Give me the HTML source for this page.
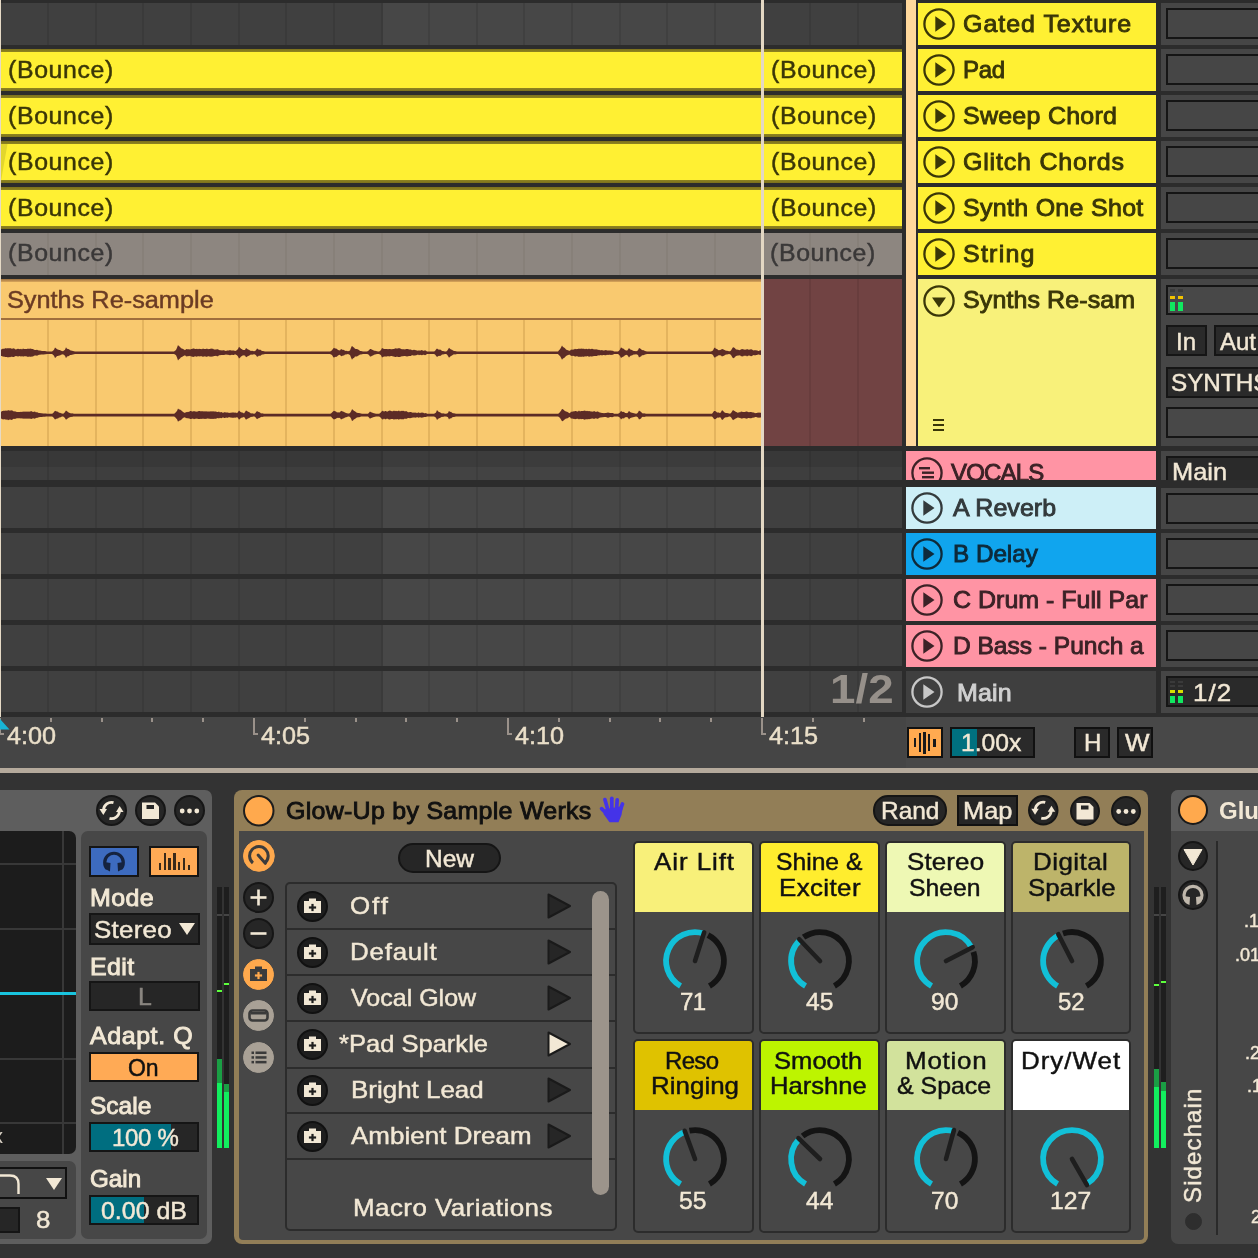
<!DOCTYPE html><html><head><meta charset="utf-8"><style>
html,body{margin:0;padding:0;}
body{width:1258px;height:1258px;overflow:hidden;background:#2c2c2c;position:relative;font-family:"Liberation Sans", sans-serif;}
.a{position:absolute;}
.t{white-space:pre;line-height:1;will-change:transform;transform-origin:0 0;}
</style></head><body>
<div class="a" style="left:0px;top:3px;width:382px;height:42px;background:#404040"></div>
<div class="a" style="left:382px;top:3px;width:381px;height:42px;background:#474747"></div>
<div class="a" style="left:763px;top:3px;width:139px;height:42px;background:#404040"></div>
<div class="a" style="left:47.2px;top:3px;width:2px;height:42px;background:#3a3a3a"></div>
<div class="a" style="left:94.8px;top:3px;width:2px;height:42px;background:#3a3a3a"></div>
<div class="a" style="left:142.4px;top:3px;width:2px;height:42px;background:#3a3a3a"></div>
<div class="a" style="left:190.0px;top:3px;width:2px;height:42px;background:#3a3a3a"></div>
<div class="a" style="left:237.7px;top:3px;width:2px;height:42px;background:#3a3a3a"></div>
<div class="a" style="left:285.3px;top:3px;width:2px;height:42px;background:#3a3a3a"></div>
<div class="a" style="left:332.9px;top:3px;width:2px;height:42px;background:#3a3a3a"></div>
<div class="a" style="left:380.5px;top:3px;width:2px;height:42px;background:#3a3a3a"></div>
<div class="a" style="left:428.1px;top:3px;width:2px;height:42px;background:#404040"></div>
<div class="a" style="left:475.7px;top:3px;width:2px;height:42px;background:#404040"></div>
<div class="a" style="left:523.3px;top:3px;width:2px;height:42px;background:#404040"></div>
<div class="a" style="left:570.9px;top:3px;width:2px;height:42px;background:#404040"></div>
<div class="a" style="left:618.5px;top:3px;width:2px;height:42px;background:#404040"></div>
<div class="a" style="left:666.1px;top:3px;width:2px;height:42px;background:#404040"></div>
<div class="a" style="left:713.8px;top:3px;width:2px;height:42px;background:#404040"></div>
<div class="a" style="left:761.4px;top:3px;width:2px;height:42px;background:#404040"></div>
<div class="a" style="left:809.0px;top:3px;width:2px;height:42px;background:#3a3a3a"></div>
<div class="a" style="left:856.6px;top:3px;width:2px;height:42px;background:#3a3a3a"></div>
<div class="a" style="left:0px;top:487px;width:382px;height:41px;background:#404040"></div>
<div class="a" style="left:382px;top:487px;width:381px;height:41px;background:#474747"></div>
<div class="a" style="left:763px;top:487px;width:139px;height:41px;background:#404040"></div>
<div class="a" style="left:47.2px;top:487px;width:2px;height:41px;background:#3a3a3a"></div>
<div class="a" style="left:94.8px;top:487px;width:2px;height:41px;background:#3a3a3a"></div>
<div class="a" style="left:142.4px;top:487px;width:2px;height:41px;background:#3a3a3a"></div>
<div class="a" style="left:190.0px;top:487px;width:2px;height:41px;background:#3a3a3a"></div>
<div class="a" style="left:237.7px;top:487px;width:2px;height:41px;background:#3a3a3a"></div>
<div class="a" style="left:285.3px;top:487px;width:2px;height:41px;background:#3a3a3a"></div>
<div class="a" style="left:332.9px;top:487px;width:2px;height:41px;background:#3a3a3a"></div>
<div class="a" style="left:380.5px;top:487px;width:2px;height:41px;background:#3a3a3a"></div>
<div class="a" style="left:428.1px;top:487px;width:2px;height:41px;background:#404040"></div>
<div class="a" style="left:475.7px;top:487px;width:2px;height:41px;background:#404040"></div>
<div class="a" style="left:523.3px;top:487px;width:2px;height:41px;background:#404040"></div>
<div class="a" style="left:570.9px;top:487px;width:2px;height:41px;background:#404040"></div>
<div class="a" style="left:618.5px;top:487px;width:2px;height:41px;background:#404040"></div>
<div class="a" style="left:666.1px;top:487px;width:2px;height:41px;background:#404040"></div>
<div class="a" style="left:713.8px;top:487px;width:2px;height:41px;background:#404040"></div>
<div class="a" style="left:761.4px;top:487px;width:2px;height:41px;background:#404040"></div>
<div class="a" style="left:809.0px;top:487px;width:2px;height:41px;background:#3a3a3a"></div>
<div class="a" style="left:856.6px;top:487px;width:2px;height:41px;background:#3a3a3a"></div>
<div class="a" style="left:0px;top:533px;width:382px;height:41px;background:#404040"></div>
<div class="a" style="left:382px;top:533px;width:381px;height:41px;background:#474747"></div>
<div class="a" style="left:763px;top:533px;width:139px;height:41px;background:#404040"></div>
<div class="a" style="left:47.2px;top:533px;width:2px;height:41px;background:#3a3a3a"></div>
<div class="a" style="left:94.8px;top:533px;width:2px;height:41px;background:#3a3a3a"></div>
<div class="a" style="left:142.4px;top:533px;width:2px;height:41px;background:#3a3a3a"></div>
<div class="a" style="left:190.0px;top:533px;width:2px;height:41px;background:#3a3a3a"></div>
<div class="a" style="left:237.7px;top:533px;width:2px;height:41px;background:#3a3a3a"></div>
<div class="a" style="left:285.3px;top:533px;width:2px;height:41px;background:#3a3a3a"></div>
<div class="a" style="left:332.9px;top:533px;width:2px;height:41px;background:#3a3a3a"></div>
<div class="a" style="left:380.5px;top:533px;width:2px;height:41px;background:#3a3a3a"></div>
<div class="a" style="left:428.1px;top:533px;width:2px;height:41px;background:#404040"></div>
<div class="a" style="left:475.7px;top:533px;width:2px;height:41px;background:#404040"></div>
<div class="a" style="left:523.3px;top:533px;width:2px;height:41px;background:#404040"></div>
<div class="a" style="left:570.9px;top:533px;width:2px;height:41px;background:#404040"></div>
<div class="a" style="left:618.5px;top:533px;width:2px;height:41px;background:#404040"></div>
<div class="a" style="left:666.1px;top:533px;width:2px;height:41px;background:#404040"></div>
<div class="a" style="left:713.8px;top:533px;width:2px;height:41px;background:#404040"></div>
<div class="a" style="left:761.4px;top:533px;width:2px;height:41px;background:#404040"></div>
<div class="a" style="left:809.0px;top:533px;width:2px;height:41px;background:#3a3a3a"></div>
<div class="a" style="left:856.6px;top:533px;width:2px;height:41px;background:#3a3a3a"></div>
<div class="a" style="left:0px;top:579px;width:382px;height:41px;background:#404040"></div>
<div class="a" style="left:382px;top:579px;width:381px;height:41px;background:#474747"></div>
<div class="a" style="left:763px;top:579px;width:139px;height:41px;background:#404040"></div>
<div class="a" style="left:47.2px;top:579px;width:2px;height:41px;background:#3a3a3a"></div>
<div class="a" style="left:94.8px;top:579px;width:2px;height:41px;background:#3a3a3a"></div>
<div class="a" style="left:142.4px;top:579px;width:2px;height:41px;background:#3a3a3a"></div>
<div class="a" style="left:190.0px;top:579px;width:2px;height:41px;background:#3a3a3a"></div>
<div class="a" style="left:237.7px;top:579px;width:2px;height:41px;background:#3a3a3a"></div>
<div class="a" style="left:285.3px;top:579px;width:2px;height:41px;background:#3a3a3a"></div>
<div class="a" style="left:332.9px;top:579px;width:2px;height:41px;background:#3a3a3a"></div>
<div class="a" style="left:380.5px;top:579px;width:2px;height:41px;background:#3a3a3a"></div>
<div class="a" style="left:428.1px;top:579px;width:2px;height:41px;background:#404040"></div>
<div class="a" style="left:475.7px;top:579px;width:2px;height:41px;background:#404040"></div>
<div class="a" style="left:523.3px;top:579px;width:2px;height:41px;background:#404040"></div>
<div class="a" style="left:570.9px;top:579px;width:2px;height:41px;background:#404040"></div>
<div class="a" style="left:618.5px;top:579px;width:2px;height:41px;background:#404040"></div>
<div class="a" style="left:666.1px;top:579px;width:2px;height:41px;background:#404040"></div>
<div class="a" style="left:713.8px;top:579px;width:2px;height:41px;background:#404040"></div>
<div class="a" style="left:761.4px;top:579px;width:2px;height:41px;background:#404040"></div>
<div class="a" style="left:809.0px;top:579px;width:2px;height:41px;background:#3a3a3a"></div>
<div class="a" style="left:856.6px;top:579px;width:2px;height:41px;background:#3a3a3a"></div>
<div class="a" style="left:0px;top:625px;width:382px;height:41px;background:#404040"></div>
<div class="a" style="left:382px;top:625px;width:381px;height:41px;background:#474747"></div>
<div class="a" style="left:763px;top:625px;width:139px;height:41px;background:#404040"></div>
<div class="a" style="left:47.2px;top:625px;width:2px;height:41px;background:#3a3a3a"></div>
<div class="a" style="left:94.8px;top:625px;width:2px;height:41px;background:#3a3a3a"></div>
<div class="a" style="left:142.4px;top:625px;width:2px;height:41px;background:#3a3a3a"></div>
<div class="a" style="left:190.0px;top:625px;width:2px;height:41px;background:#3a3a3a"></div>
<div class="a" style="left:237.7px;top:625px;width:2px;height:41px;background:#3a3a3a"></div>
<div class="a" style="left:285.3px;top:625px;width:2px;height:41px;background:#3a3a3a"></div>
<div class="a" style="left:332.9px;top:625px;width:2px;height:41px;background:#3a3a3a"></div>
<div class="a" style="left:380.5px;top:625px;width:2px;height:41px;background:#3a3a3a"></div>
<div class="a" style="left:428.1px;top:625px;width:2px;height:41px;background:#404040"></div>
<div class="a" style="left:475.7px;top:625px;width:2px;height:41px;background:#404040"></div>
<div class="a" style="left:523.3px;top:625px;width:2px;height:41px;background:#404040"></div>
<div class="a" style="left:570.9px;top:625px;width:2px;height:41px;background:#404040"></div>
<div class="a" style="left:618.5px;top:625px;width:2px;height:41px;background:#404040"></div>
<div class="a" style="left:666.1px;top:625px;width:2px;height:41px;background:#404040"></div>
<div class="a" style="left:713.8px;top:625px;width:2px;height:41px;background:#404040"></div>
<div class="a" style="left:761.4px;top:625px;width:2px;height:41px;background:#404040"></div>
<div class="a" style="left:809.0px;top:625px;width:2px;height:41px;background:#3a3a3a"></div>
<div class="a" style="left:856.6px;top:625px;width:2px;height:41px;background:#3a3a3a"></div>
<div class="a" style="left:0px;top:671px;width:382px;height:41px;background:#404040"></div>
<div class="a" style="left:382px;top:671px;width:381px;height:41px;background:#474747"></div>
<div class="a" style="left:763px;top:671px;width:139px;height:41px;background:#404040"></div>
<div class="a" style="left:47.2px;top:671px;width:2px;height:41px;background:#3a3a3a"></div>
<div class="a" style="left:94.8px;top:671px;width:2px;height:41px;background:#3a3a3a"></div>
<div class="a" style="left:142.4px;top:671px;width:2px;height:41px;background:#3a3a3a"></div>
<div class="a" style="left:190.0px;top:671px;width:2px;height:41px;background:#3a3a3a"></div>
<div class="a" style="left:237.7px;top:671px;width:2px;height:41px;background:#3a3a3a"></div>
<div class="a" style="left:285.3px;top:671px;width:2px;height:41px;background:#3a3a3a"></div>
<div class="a" style="left:332.9px;top:671px;width:2px;height:41px;background:#3a3a3a"></div>
<div class="a" style="left:380.5px;top:671px;width:2px;height:41px;background:#3a3a3a"></div>
<div class="a" style="left:428.1px;top:671px;width:2px;height:41px;background:#404040"></div>
<div class="a" style="left:475.7px;top:671px;width:2px;height:41px;background:#404040"></div>
<div class="a" style="left:523.3px;top:671px;width:2px;height:41px;background:#404040"></div>
<div class="a" style="left:570.9px;top:671px;width:2px;height:41px;background:#404040"></div>
<div class="a" style="left:618.5px;top:671px;width:2px;height:41px;background:#404040"></div>
<div class="a" style="left:666.1px;top:671px;width:2px;height:41px;background:#404040"></div>
<div class="a" style="left:713.8px;top:671px;width:2px;height:41px;background:#404040"></div>
<div class="a" style="left:761.4px;top:671px;width:2px;height:41px;background:#404040"></div>
<div class="a" style="left:809.0px;top:671px;width:2px;height:41px;background:#3a3a3a"></div>
<div class="a" style="left:856.6px;top:671px;width:2px;height:41px;background:#3a3a3a"></div>
<div class="a" style="left:0px;top:451px;width:382px;height:16px;background:#383838"></div>
<div class="a" style="left:382px;top:451px;width:381px;height:16px;background:#3c3c3c"></div>
<div class="a" style="left:763px;top:451px;width:139px;height:16px;background:#383838"></div>
<div class="a" style="left:47.2px;top:451px;width:2px;height:16px;background:#333333"></div>
<div class="a" style="left:94.8px;top:451px;width:2px;height:16px;background:#333333"></div>
<div class="a" style="left:142.4px;top:451px;width:2px;height:16px;background:#333333"></div>
<div class="a" style="left:190.0px;top:451px;width:2px;height:16px;background:#333333"></div>
<div class="a" style="left:237.7px;top:451px;width:2px;height:16px;background:#333333"></div>
<div class="a" style="left:285.3px;top:451px;width:2px;height:16px;background:#333333"></div>
<div class="a" style="left:332.9px;top:451px;width:2px;height:16px;background:#333333"></div>
<div class="a" style="left:380.5px;top:451px;width:2px;height:16px;background:#333333"></div>
<div class="a" style="left:428.1px;top:451px;width:2px;height:16px;background:#383838"></div>
<div class="a" style="left:475.7px;top:451px;width:2px;height:16px;background:#383838"></div>
<div class="a" style="left:523.3px;top:451px;width:2px;height:16px;background:#383838"></div>
<div class="a" style="left:570.9px;top:451px;width:2px;height:16px;background:#383838"></div>
<div class="a" style="left:618.5px;top:451px;width:2px;height:16px;background:#383838"></div>
<div class="a" style="left:666.1px;top:451px;width:2px;height:16px;background:#383838"></div>
<div class="a" style="left:713.8px;top:451px;width:2px;height:16px;background:#383838"></div>
<div class="a" style="left:761.4px;top:451px;width:2px;height:16px;background:#383838"></div>
<div class="a" style="left:809.0px;top:451px;width:2px;height:16px;background:#333333"></div>
<div class="a" style="left:856.6px;top:451px;width:2px;height:16px;background:#333333"></div>
<div class="a" style="left:0px;top:467px;width:382px;height:13px;background:#3e3e3e"></div>
<div class="a" style="left:382px;top:467px;width:381px;height:13px;background:#434343"></div>
<div class="a" style="left:763px;top:467px;width:139px;height:13px;background:#3e3e3e"></div>
<div class="a" style="left:47.2px;top:467px;width:2px;height:13px;background:#383838"></div>
<div class="a" style="left:94.8px;top:467px;width:2px;height:13px;background:#383838"></div>
<div class="a" style="left:142.4px;top:467px;width:2px;height:13px;background:#383838"></div>
<div class="a" style="left:190.0px;top:467px;width:2px;height:13px;background:#383838"></div>
<div class="a" style="left:237.7px;top:467px;width:2px;height:13px;background:#383838"></div>
<div class="a" style="left:285.3px;top:467px;width:2px;height:13px;background:#383838"></div>
<div class="a" style="left:332.9px;top:467px;width:2px;height:13px;background:#383838"></div>
<div class="a" style="left:380.5px;top:467px;width:2px;height:13px;background:#383838"></div>
<div class="a" style="left:428.1px;top:467px;width:2px;height:13px;background:#3d3d3d"></div>
<div class="a" style="left:475.7px;top:467px;width:2px;height:13px;background:#3d3d3d"></div>
<div class="a" style="left:523.3px;top:467px;width:2px;height:13px;background:#3d3d3d"></div>
<div class="a" style="left:570.9px;top:467px;width:2px;height:13px;background:#3d3d3d"></div>
<div class="a" style="left:618.5px;top:467px;width:2px;height:13px;background:#3d3d3d"></div>
<div class="a" style="left:666.1px;top:467px;width:2px;height:13px;background:#3d3d3d"></div>
<div class="a" style="left:713.8px;top:467px;width:2px;height:13px;background:#3d3d3d"></div>
<div class="a" style="left:761.4px;top:467px;width:2px;height:13px;background:#3d3d3d"></div>
<div class="a" style="left:809.0px;top:467px;width:2px;height:13px;background:#383838"></div>
<div class="a" style="left:856.6px;top:467px;width:2px;height:13px;background:#383838"></div>
<div class="a" style="left:1px;top:49px;width:760px;height:42px;background:#FFF033"></div>
<div class="a" style="left:1px;top:49px;width:760px;height:3px;background:linear-gradient(#7c711c,#8f8420)"></div>
<div class="a" style="left:1px;top:88px;width:760px;height:3px;background:linear-gradient(#8f8420,#7c711c)"></div>
<div class="a t" style="left:7.6px;top:59.0px;font-size:23px;color:#3a3608;letter-spacing:0.60px;transform:scaleX(1.0800);-webkit-text-stroke:0.45px #3a3608">(Bounce)</div>
<div class="a" style="left:764px;top:49px;width:138px;height:42px;background:#FFF033"></div>
<div class="a" style="left:764px;top:49px;width:138px;height:3px;background:linear-gradient(#7c711c,#8f8420)"></div>
<div class="a" style="left:764px;top:88px;width:138px;height:3px;background:linear-gradient(#8f8420,#7c711c)"></div>
<div class="a t" style="left:770.6px;top:59.0px;font-size:23px;color:#3a3608;letter-spacing:0.60px;transform:scaleX(1.0800);-webkit-text-stroke:0.45px #3a3608">(Bounce)</div>
<div class="a" style="left:1px;top:95px;width:760px;height:42px;background:#FFF033"></div>
<div class="a" style="left:1px;top:95px;width:760px;height:3px;background:linear-gradient(#7c711c,#8f8420)"></div>
<div class="a" style="left:1px;top:134px;width:760px;height:3px;background:linear-gradient(#8f8420,#7c711c)"></div>
<div class="a t" style="left:7.6px;top:105.0px;font-size:23px;color:#3a3608;letter-spacing:0.60px;transform:scaleX(1.0800);-webkit-text-stroke:0.45px #3a3608">(Bounce)</div>
<div class="a" style="left:764px;top:95px;width:138px;height:42px;background:#FFF033"></div>
<div class="a" style="left:764px;top:95px;width:138px;height:3px;background:linear-gradient(#7c711c,#8f8420)"></div>
<div class="a" style="left:764px;top:134px;width:138px;height:3px;background:linear-gradient(#8f8420,#7c711c)"></div>
<div class="a t" style="left:770.6px;top:105.0px;font-size:23px;color:#3a3608;letter-spacing:0.60px;transform:scaleX(1.0800);-webkit-text-stroke:0.45px #3a3608">(Bounce)</div>
<div class="a" style="left:1px;top:141px;width:760px;height:42px;background:#FFF033"></div>
<div class="a" style="left:1px;top:141px;width:760px;height:3px;background:linear-gradient(#7c711c,#8f8420)"></div>
<div class="a" style="left:1px;top:180px;width:760px;height:3px;background:linear-gradient(#8f8420,#7c711c)"></div>
<div class="a t" style="left:7.6px;top:151.0px;font-size:23px;color:#3a3608;letter-spacing:0.60px;transform:scaleX(1.0800);-webkit-text-stroke:0.45px #3a3608">(Bounce)</div>
<div class="a" style="left:764px;top:141px;width:138px;height:42px;background:#FFF033"></div>
<div class="a" style="left:764px;top:141px;width:138px;height:3px;background:linear-gradient(#7c711c,#8f8420)"></div>
<div class="a" style="left:764px;top:180px;width:138px;height:3px;background:linear-gradient(#8f8420,#7c711c)"></div>
<div class="a t" style="left:770.6px;top:151.0px;font-size:23px;color:#3a3608;letter-spacing:0.60px;transform:scaleX(1.0800);-webkit-text-stroke:0.45px #3a3608">(Bounce)</div>
<div class="a" style="left:1px;top:187px;width:760px;height:42px;background:#FFF033"></div>
<div class="a" style="left:1px;top:187px;width:760px;height:3px;background:linear-gradient(#7c711c,#8f8420)"></div>
<div class="a" style="left:1px;top:226px;width:760px;height:3px;background:linear-gradient(#8f8420,#7c711c)"></div>
<div class="a t" style="left:7.6px;top:197.0px;font-size:23px;color:#3a3608;letter-spacing:0.60px;transform:scaleX(1.0800);-webkit-text-stroke:0.45px #3a3608">(Bounce)</div>
<div class="a" style="left:764px;top:187px;width:138px;height:42px;background:#FFF033"></div>
<div class="a" style="left:764px;top:187px;width:138px;height:3px;background:linear-gradient(#7c711c,#8f8420)"></div>
<div class="a" style="left:764px;top:226px;width:138px;height:3px;background:linear-gradient(#8f8420,#7c711c)"></div>
<div class="a t" style="left:770.6px;top:197.0px;font-size:23px;color:#3a3608;letter-spacing:0.60px;transform:scaleX(1.0800);-webkit-text-stroke:0.45px #3a3608">(Bounce)</div>
<svg class="a" style="left:1px;top:144px" width="8" height="38"><polygon points="0,0 6.5,0 0,37" fill="#E2D62C"/></svg>
<div class="a" style="left:1px;top:232.5px;width:760px;height:42px;background:#8D8680"></div>
<div class="a" style="left:764px;top:232.5px;width:138px;height:42px;background:#8D8680"></div>
<div class="a" style="left:47.2px;top:232.5px;width:2px;height:42px;background:#878079"></div>
<div class="a" style="left:94.8px;top:232.5px;width:2px;height:42px;background:#878079"></div>
<div class="a" style="left:142.4px;top:232.5px;width:2px;height:42px;background:#878079"></div>
<div class="a" style="left:190.0px;top:232.5px;width:2px;height:42px;background:#878079"></div>
<div class="a" style="left:237.7px;top:232.5px;width:2px;height:42px;background:#878079"></div>
<div class="a" style="left:285.3px;top:232.5px;width:2px;height:42px;background:#878079"></div>
<div class="a" style="left:332.9px;top:232.5px;width:2px;height:42px;background:#878079"></div>
<div class="a" style="left:380.5px;top:232.5px;width:2px;height:42px;background:#878079"></div>
<div class="a" style="left:428.1px;top:232.5px;width:2px;height:42px;background:#878079"></div>
<div class="a" style="left:475.7px;top:232.5px;width:2px;height:42px;background:#878079"></div>
<div class="a" style="left:523.3px;top:232.5px;width:2px;height:42px;background:#878079"></div>
<div class="a" style="left:570.9px;top:232.5px;width:2px;height:42px;background:#878079"></div>
<div class="a" style="left:618.5px;top:232.5px;width:2px;height:42px;background:#878079"></div>
<div class="a" style="left:666.1px;top:232.5px;width:2px;height:42px;background:#878079"></div>
<div class="a" style="left:713.8px;top:232.5px;width:2px;height:42px;background:#878079"></div>
<div class="a" style="left:809.0px;top:232.5px;width:2px;height:42px;background:#878079"></div>
<div class="a" style="left:856.6px;top:232.5px;width:2px;height:42px;background:#878079"></div>
<div class="a t" style="left:7.6px;top:242.0px;font-size:23px;color:#3a3838;letter-spacing:0.60px;transform:scaleX(1.0800);-webkit-text-stroke:0.45px #3a3838">(Bounce)</div>
<div class="a t" style="left:770.3px;top:242.0px;font-size:23px;color:#3a3838;letter-spacing:0.60px;transform:scaleX(1.0800);-webkit-text-stroke:0.45px #3a3838">(Bounce)</div>
<div class="a" style="left:1px;top:279px;width:760px;height:167px;background:#F9C96F"></div>
<div class="a" style="left:1px;top:279px;width:760px;height:3px;background:linear-gradient(#9c7040,#d9a75c)"></div>
<div class="a" style="left:1px;top:318px;width:760px;height:2px;background:#A06E3C"></div>
<div class="a" style="left:47.2px;top:319.5px;width:2px;height:126.5px;background:#E4B45E"></div>
<div class="a" style="left:94.8px;top:319.5px;width:2px;height:126.5px;background:#E4B45E"></div>
<div class="a" style="left:142.4px;top:319.5px;width:2px;height:126.5px;background:#E4B45E"></div>
<div class="a" style="left:190.0px;top:319.5px;width:2px;height:126.5px;background:#E4B45E"></div>
<div class="a" style="left:237.7px;top:319.5px;width:2px;height:126.5px;background:#E4B45E"></div>
<div class="a" style="left:285.3px;top:319.5px;width:2px;height:126.5px;background:#E4B45E"></div>
<div class="a" style="left:332.9px;top:319.5px;width:2px;height:126.5px;background:#E4B45E"></div>
<div class="a" style="left:380.5px;top:319.5px;width:2px;height:126.5px;background:#E4B45E"></div>
<div class="a" style="left:428.1px;top:319.5px;width:2px;height:126.5px;background:#E4B45E"></div>
<div class="a" style="left:475.7px;top:319.5px;width:2px;height:126.5px;background:#E4B45E"></div>
<div class="a" style="left:523.3px;top:319.5px;width:2px;height:126.5px;background:#E4B45E"></div>
<div class="a" style="left:570.9px;top:319.5px;width:2px;height:126.5px;background:#E4B45E"></div>
<div class="a" style="left:618.5px;top:319.5px;width:2px;height:126.5px;background:#E4B45E"></div>
<div class="a" style="left:666.1px;top:319.5px;width:2px;height:126.5px;background:#E4B45E"></div>
<div class="a" style="left:713.8px;top:319.5px;width:2px;height:126.5px;background:#E4B45E"></div>
<div class="a t" style="left:6.9px;top:288.5px;font-size:23px;color:#6A3B24;transform:scaleX(1.1000);-webkit-text-stroke:0.45px #6A3B24">Synths Re-sample</div>
<div class="a" style="left:764px;top:279px;width:138px;height:167px;background:#714343"></div>
<div class="a" style="left:809.0px;top:279px;width:2px;height:167px;background:#683d3d"></div>
<div class="a" style="left:856.6px;top:279px;width:2px;height:167px;background:#683d3d"></div>
<svg class="a" style="left:1px;top:0" width="761" height="460"><path d="M0,352.7 L0,349.4 L1,349.3 L2,348.6 L3,348.9 L4,348.3 L5,348.3 L6,348.5 L7,348.0 L8,348.5 L9,348.1 L10,348.6 L11,348.7 L12,348.5 L13,348.3 L14,349.2 L15,349.4 L16,349.1 L17,348.8 L18,349.1 L19,349.3 L20,348.7 L21,349.5 L22,348.6 L23,349.1 L24,349.1 L25,349.1 L26,348.9 L27,348.4 L28,349.0 L29,348.6 L30,348.7 L31,349.0 L32,349.0 L33,349.7 L34,349.9 L35,349.9 L36,349.7 L37,350.2 L38,350.6 L39,350.6 L40,350.8 L41,350.9 L42,351.0 L43,351.0 L44,351.1 L45,351.2 L46,351.4 L47,351.4 L48,351.4 L49,351.4 L50,351.4 L51,351.4 L52,350.7 L53,349.7 L54,347.4 L55,348.2 L56,349.3 L57,349.5 L58,350.0 L59,350.0 L60,350.7 L61,351.0 L62,351.2 L63,350.5 L64,349.7 L65,347.2 L66,348.8 L67,349.1 L68,349.3 L69,350.3 L70,350.4 L71,350.7 L72,351.0 L73,351.2 L74,351.4 L75,351.4 L76,351.4 L77,351.4 L78,351.4 L79,351.4 L80,351.4 L81,351.4 L82,351.4 L83,351.4 L84,351.4 L85,351.4 L86,351.4 L87,351.4 L88,351.4 L89,351.4 L90,351.4 L91,351.4 L92,351.4 L93,351.4 L94,351.4 L95,351.4 L96,351.4 L97,351.4 L98,351.4 L99,351.4 L100,351.4 L101,351.4 L102,351.4 L103,351.4 L104,351.4 L105,351.4 L106,351.4 L107,351.4 L108,351.4 L109,351.4 L110,351.4 L111,351.4 L112,351.4 L113,351.4 L114,351.4 L115,351.4 L116,351.4 L117,351.4 L118,351.4 L119,351.4 L120,351.4 L121,351.4 L122,351.4 L123,351.4 L124,351.4 L125,351.4 L126,351.4 L127,351.4 L128,351.4 L129,351.4 L130,351.4 L131,351.4 L132,351.4 L133,351.4 L134,351.4 L135,351.4 L136,351.4 L137,351.4 L138,351.4 L139,351.4 L140,351.4 L141,351.4 L142,351.4 L143,351.4 L144,351.4 L145,351.4 L146,351.4 L147,351.4 L148,351.4 L149,351.4 L150,351.4 L151,351.4 L152,351.4 L153,351.4 L154,351.4 L155,351.4 L156,351.4 L157,351.4 L158,351.4 L159,351.4 L160,351.4 L161,351.4 L162,351.4 L163,351.4 L164,351.4 L165,351.4 L166,351.4 L167,351.4 L168,351.4 L169,351.4 L170,351.4 L171,351.4 L172,351.4 L173,351.4 L174,350.8 L175,350.1 L176,347.8 L177,344.9 L178,346.2 L179,346.8 L180,348.2 L181,348.5 L182,349.1 L183,349.6 L184,350.2 L185,349.2 L186,349.0 L187,349.4 L188,349.1 L189,349.7 L190,348.9 L191,348.9 L192,348.5 L193,348.6 L194,349.1 L195,349.0 L196,348.7 L197,349.3 L198,348.8 L199,349.1 L200,349.1 L201,349.2 L202,348.5 L203,349.1 L204,349.0 L205,348.9 L206,348.4 L207,349.3 L208,349.0 L209,348.9 L210,348.6 L211,348.8 L212,348.8 L213,349.5 L214,349.4 L215,349.6 L216,349.2 L217,349.2 L218,350.1 L219,350.2 L220,350.3 L221,350.4 L222,350.3 L223,350.3 L224,350.7 L225,351.0 L226,350.6 L227,350.6 L228,350.5 L229,350.1 L230,350.4 L231,350.6 L232,350.5 L233,350.5 L234,351.1 L235,350.7 L236,350.1 L237,348.9 L238,346.8 L239,347.7 L240,348.8 L241,349.3 L242,350.1 L243,350.0 L244,350.0 L245,348.1 L246,348.7 L247,349.4 L248,349.7 L249,350.4 L250,350.9 L251,350.7 L252,351.0 L253,351.2 L254,350.9 L255,350.2 L256,348.6 L257,349.0 L258,349.9 L259,349.5 L260,350.2 L261,351.0 L262,350.9 L263,351.2 L264,351.4 L265,351.4 L266,351.4 L267,351.4 L268,351.4 L269,351.4 L270,351.4 L271,351.4 L272,351.4 L273,351.4 L274,351.4 L275,351.4 L276,351.4 L277,351.4 L278,351.4 L279,351.4 L280,351.4 L281,351.4 L282,351.4 L283,351.4 L284,351.4 L285,351.4 L286,351.4 L287,351.4 L288,351.4 L289,351.4 L290,351.4 L291,351.4 L292,351.4 L293,351.4 L294,351.4 L295,351.4 L296,351.4 L297,351.4 L298,351.4 L299,351.4 L300,351.4 L301,351.4 L302,351.4 L303,351.4 L304,351.4 L305,351.4 L306,351.4 L307,351.4 L308,351.4 L309,351.4 L310,351.4 L311,351.4 L312,351.4 L313,351.4 L314,351.4 L315,351.4 L316,351.4 L317,351.4 L318,351.4 L319,351.4 L320,351.4 L321,351.4 L322,351.4 L323,351.4 L324,351.4 L325,351.4 L326,351.4 L327,351.4 L328,351.4 L329,351.4 L330,351.0 L331,350.3 L332,348.7 L333,347.7 L334,348.6 L335,348.5 L336,348.9 L337,349.9 L338,350.3 L339,350.6 L340,349.1 L341,349.4 L342,350.0 L343,349.8 L344,350.9 L345,350.8 L346,351.1 L347,351.3 L348,350.9 L349,350.4 L350,347.8 L351,345.7 L352,347.1 L353,347.5 L354,348.8 L355,348.9 L356,349.0 L357,349.6 L358,350.1 L359,350.9 L360,350.9 L361,351.2 L362,351.4 L363,351.4 L364,351.4 L365,351.4 L366,351.4 L367,351.1 L368,350.3 L369,349.0 L370,349.0 L371,349.7 L372,349.9 L373,350.7 L374,350.8 L375,351.1 L376,351.3 L377,351.4 L378,351.4 L379,350.9 L380,350.1 L381,347.9 L382,348.4 L383,349.0 L384,348.9 L385,348.9 L386,348.9 L387,349.3 L388,348.9 L389,349.1 L390,349.3 L391,349.3 L392,349.0 L393,349.0 L394,348.5 L395,348.3 L396,348.8 L397,348.3 L398,348.3 L399,348.3 L400,349.0 L401,349.2 L402,349.2 L403,349.3 L404,349.4 L405,349.1 L406,348.9 L407,349.1 L408,349.5 L409,349.5 L410,349.5 L411,350.3 L412,349.9 L413,349.8 L414,350.0 L415,350.2 L416,350.5 L417,350.8 L418,350.2 L419,350.7 L420,350.3 L421,350.1 L422,350.7 L423,350.7 L424,350.2 L425,350.7 L426,351.4 L427,351.4 L428,351.4 L429,351.4 L430,351.4 L431,351.4 L432,351.4 L433,351.4 L434,350.9 L435,349.6 L436,348.5 L437,349.2 L438,349.7 L439,349.5 L440,350.0 L441,351.0 L442,350.9 L443,351.2 L444,351.4 L445,351.4 L446,350.9 L447,349.5 L448,347.7 L449,348.7 L450,349.5 L451,349.8 L452,350.6 L453,351.1 L454,350.9 L455,351.2 L456,351.4 L457,351.4 L458,351.4 L459,351.4 L460,351.4 L461,351.4 L462,351.4 L463,351.4 L464,351.4 L465,351.4 L466,351.4 L467,351.4 L468,351.4 L469,351.4 L470,351.4 L471,351.4 L472,351.4 L473,351.4 L474,351.4 L475,351.4 L476,351.4 L477,351.4 L478,351.4 L479,351.4 L480,351.4 L481,351.4 L482,351.4 L483,351.4 L484,351.4 L485,351.4 L486,351.4 L487,351.4 L488,351.4 L489,351.4 L490,351.4 L491,351.4 L492,351.4 L493,351.4 L494,351.4 L495,351.4 L496,351.4 L497,351.4 L498,351.4 L499,351.4 L500,351.4 L501,351.4 L502,351.4 L503,351.4 L504,351.4 L505,351.4 L506,351.4 L507,351.4 L508,351.4 L509,351.4 L510,351.4 L511,351.4 L512,351.4 L513,351.4 L514,351.4 L515,351.4 L516,351.4 L517,351.4 L518,351.4 L519,351.4 L520,351.4 L521,351.4 L522,351.4 L523,351.4 L524,351.4 L525,351.4 L526,351.4 L527,351.4 L528,351.4 L529,351.4 L530,351.4 L531,351.4 L532,351.4 L533,351.4 L534,351.4 L535,351.4 L536,351.4 L537,351.4 L538,351.4 L539,351.4 L540,351.4 L541,351.4 L542,351.4 L543,351.4 L544,351.4 L545,351.4 L546,351.4 L547,351.4 L548,351.4 L549,351.4 L550,351.4 L551,351.4 L552,351.4 L553,351.4 L554,351.4 L555,351.4 L556,351.4 L557,351.4 L558,350.2 L559,349.3 L560,347.6 L561,345.6 L562,347.0 L563,347.4 L564,348.2 L565,349.4 L566,349.9 L567,350.3 L568,350.7 L569,350.7 L570,349.4 L571,349.7 L572,349.4 L573,349.6 L574,348.7 L575,349.2 L576,349.1 L577,348.9 L578,348.5 L579,348.9 L580,348.4 L581,348.8 L582,348.7 L583,348.7 L584,349.2 L585,348.8 L586,349.1 L587,349.3 L588,348.5 L589,349.2 L590,349.0 L591,348.8 L592,349.1 L593,349.4 L594,349.3 L595,349.4 L596,349.3 L597,350.1 L598,349.8 L599,350.2 L600,350.3 L601,350.0 L602,350.4 L603,350.4 L604,350.2 L605,350.1 L606,350.6 L607,350.4 L608,350.6 L609,350.6 L610,350.5 L611,350.7 L612,350.7 L613,351.4 L614,351.4 L615,351.4 L616,351.4 L617,351.4 L618,350.7 L619,349.5 L620,347.3 L621,348.2 L622,348.6 L623,349.1 L624,350.2 L625,350.3 L626,350.7 L627,349.4 L628,347.9 L629,349.2 L630,349.8 L631,349.9 L632,350.7 L633,350.9 L634,350.9 L635,351.2 L636,350.9 L637,350.3 L638,348.0 L639,348.6 L640,349.0 L641,350.2 L642,350.1 L643,350.5 L644,350.9 L645,351.2 L646,351.4 L647,351.4 L648,351.4 L649,351.4 L650,351.4 L651,351.4 L652,351.4 L653,351.4 L654,351.4 L655,351.4 L656,351.4 L657,351.4 L658,351.4 L659,351.4 L660,351.4 L661,351.4 L662,351.4 L663,351.4 L664,351.4 L665,351.4 L666,351.4 L667,351.4 L668,351.4 L669,351.4 L670,351.4 L671,351.4 L672,351.4 L673,351.4 L674,351.4 L675,351.4 L676,351.4 L677,351.4 L678,351.4 L679,351.4 L680,351.4 L681,351.4 L682,351.4 L683,351.4 L684,351.4 L685,351.4 L686,351.4 L687,351.4 L688,351.4 L689,351.4 L690,351.4 L691,351.4 L692,351.4 L693,351.4 L694,351.4 L695,351.4 L696,351.4 L697,351.4 L698,351.4 L699,351.4 L700,351.4 L701,351.4 L702,351.4 L703,351.4 L704,351.4 L705,351.4 L706,351.4 L707,351.4 L708,351.4 L709,351.4 L710,351.4 L711,351.1 L712,350.5 L713,348.3 L714,347.6 L715,349.0 L716,348.8 L717,349.9 L718,350.2 L719,350.1 L720,349.8 L721,349.0 L722,349.3 L723,349.7 L724,350.3 L725,350.8 L726,350.8 L727,351.1 L728,351.3 L729,351.2 L730,350.5 L731,348.7 L732,347.2 L733,347.5 L734,348.3 L735,349.4 L736,349.6 L737,349.8 L738,349.9 L739,350.2 L740,349.2 L741,349.2 L742,349.0 L743,349.8 L744,349.5 L745,349.8 L746,349.0 L747,349.6 L748,349.8 L749,349.6 L750,349.2 L751,349.5 L752,350.2 L753,350.5 L754,349.9 L755,350.4 L756,350.3 L757,350.9 L758,350.9 L759,350.3 L760,350.6 L760,354.8 L759,355.1 L758,354.5 L757,354.5 L756,355.1 L755,355.0 L754,355.5 L753,354.9 L752,355.2 L751,355.9 L750,356.2 L749,355.8 L748,355.6 L747,355.8 L746,356.4 L745,355.6 L744,355.9 L743,355.6 L742,356.4 L741,356.2 L740,356.2 L739,355.2 L738,355.5 L737,355.6 L736,355.8 L735,356.0 L734,357.1 L733,357.9 L732,358.2 L731,356.7 L730,354.9 L729,354.2 L728,354.1 L727,354.3 L726,354.6 L725,354.6 L724,355.1 L723,355.7 L722,356.1 L721,356.4 L720,355.6 L719,355.3 L718,355.2 L717,355.5 L716,356.6 L715,356.4 L714,357.8 L713,357.1 L712,354.9 L711,354.3 L710,354.0 L709,354.0 L708,354.0 L707,354.0 L706,354.0 L705,354.0 L704,354.0 L703,354.0 L702,354.0 L701,354.0 L700,354.0 L699,354.0 L698,354.0 L697,354.0 L696,354.0 L695,354.0 L694,354.0 L693,354.0 L692,354.0 L691,354.0 L690,354.0 L689,354.0 L688,354.0 L687,354.0 L686,354.0 L685,354.0 L684,354.0 L683,354.0 L682,354.0 L681,354.0 L680,354.0 L679,354.0 L678,354.0 L677,354.0 L676,354.0 L675,354.0 L674,354.0 L673,354.0 L672,354.0 L671,354.0 L670,354.0 L669,354.0 L668,354.0 L667,354.0 L666,354.0 L665,354.0 L664,354.0 L663,354.0 L662,354.0 L661,354.0 L660,354.0 L659,354.0 L658,354.0 L657,354.0 L656,354.0 L655,354.0 L654,354.0 L653,354.0 L652,354.0 L651,354.0 L650,354.0 L649,354.0 L648,354.0 L647,354.0 L646,354.0 L645,354.2 L644,354.5 L643,354.9 L642,355.3 L641,355.2 L640,356.4 L639,356.8 L638,357.4 L637,355.1 L636,354.5 L635,354.2 L634,354.5 L633,354.5 L632,354.7 L631,355.5 L630,355.6 L629,356.2 L628,357.5 L627,356.0 L626,354.7 L625,355.1 L624,355.2 L623,356.3 L622,356.8 L621,357.2 L620,358.1 L619,355.9 L618,354.7 L617,354.0 L616,354.0 L615,354.0 L614,354.0 L613,354.0 L612,354.7 L611,354.7 L610,354.9 L609,354.8 L608,354.8 L607,355.0 L606,354.8 L605,355.3 L604,355.2 L603,355.0 L602,355.0 L601,355.4 L600,355.1 L599,355.2 L598,355.6 L597,355.3 L596,356.1 L595,356.0 L594,356.1 L593,356.0 L592,356.3 L591,356.6 L590,356.4 L589,356.2 L588,356.9 L587,356.1 L586,356.3 L585,356.6 L584,356.2 L583,356.7 L582,356.7 L581,356.6 L580,357.0 L579,356.5 L578,356.9 L577,356.5 L576,356.3 L575,356.2 L574,356.7 L573,355.8 L572,356.0 L571,355.7 L570,356.0 L569,354.7 L568,354.7 L567,355.1 L566,355.5 L565,356.0 L564,357.2 L563,358.0 L562,358.4 L561,359.8 L560,357.8 L559,356.1 L558,355.2 L557,354.0 L556,354.0 L555,354.0 L554,354.0 L553,354.0 L552,354.0 L551,354.0 L550,354.0 L549,354.0 L548,354.0 L547,354.0 L546,354.0 L545,354.0 L544,354.0 L543,354.0 L542,354.0 L541,354.0 L540,354.0 L539,354.0 L538,354.0 L537,354.0 L536,354.0 L535,354.0 L534,354.0 L533,354.0 L532,354.0 L531,354.0 L530,354.0 L529,354.0 L528,354.0 L527,354.0 L526,354.0 L525,354.0 L524,354.0 L523,354.0 L522,354.0 L521,354.0 L520,354.0 L519,354.0 L518,354.0 L517,354.0 L516,354.0 L515,354.0 L514,354.0 L513,354.0 L512,354.0 L511,354.0 L510,354.0 L509,354.0 L508,354.0 L507,354.0 L506,354.0 L505,354.0 L504,354.0 L503,354.0 L502,354.0 L501,354.0 L500,354.0 L499,354.0 L498,354.0 L497,354.0 L496,354.0 L495,354.0 L494,354.0 L493,354.0 L492,354.0 L491,354.0 L490,354.0 L489,354.0 L488,354.0 L487,354.0 L486,354.0 L485,354.0 L484,354.0 L483,354.0 L482,354.0 L481,354.0 L480,354.0 L479,354.0 L478,354.0 L477,354.0 L476,354.0 L475,354.0 L474,354.0 L473,354.0 L472,354.0 L471,354.0 L470,354.0 L469,354.0 L468,354.0 L467,354.0 L466,354.0 L465,354.0 L464,354.0 L463,354.0 L462,354.0 L461,354.0 L460,354.0 L459,354.0 L458,354.0 L457,354.0 L456,354.0 L455,354.2 L454,354.5 L453,354.3 L452,354.8 L451,355.6 L450,355.9 L449,356.7 L448,357.7 L447,355.9 L446,354.5 L445,354.0 L444,354.0 L443,354.2 L442,354.5 L441,354.4 L440,355.4 L439,355.9 L438,355.7 L437,356.2 L436,356.9 L435,355.8 L434,354.5 L433,354.0 L432,354.0 L431,354.0 L430,354.0 L429,354.0 L428,354.0 L427,354.0 L426,354.0 L425,354.7 L424,355.2 L423,354.7 L422,354.7 L421,355.3 L420,355.1 L419,354.7 L418,355.2 L417,354.6 L416,354.9 L415,355.2 L414,355.4 L413,355.6 L412,355.5 L411,355.1 L410,355.9 L409,355.9 L408,355.9 L407,356.3 L406,356.5 L405,356.3 L404,356.0 L403,356.1 L402,356.2 L401,356.2 L400,356.4 L399,357.1 L398,357.1 L397,357.1 L396,356.6 L395,357.1 L394,356.9 L393,356.4 L392,356.4 L391,356.1 L390,356.1 L389,356.3 L388,356.5 L387,356.1 L386,356.5 L385,356.5 L384,356.5 L383,356.4 L382,357.0 L381,357.5 L380,355.3 L379,354.5 L378,354.0 L377,354.0 L376,354.1 L375,354.3 L374,354.6 L373,354.7 L372,355.5 L371,355.7 L370,356.4 L369,356.4 L368,355.1 L367,354.3 L366,354.0 L365,354.0 L364,354.0 L363,354.0 L362,354.0 L361,354.2 L360,354.5 L359,354.5 L358,355.3 L357,355.8 L356,356.4 L355,356.5 L354,356.6 L353,357.9 L352,358.3 L351,359.7 L350,357.6 L349,355.0 L348,354.5 L347,354.1 L346,354.3 L345,354.6 L344,354.5 L343,355.6 L342,355.4 L341,356.0 L340,356.3 L339,354.8 L338,355.1 L337,355.5 L336,356.5 L335,356.9 L334,356.8 L333,357.7 L332,356.7 L331,355.1 L330,354.4 L329,354.0 L328,354.0 L327,354.0 L326,354.0 L325,354.0 L324,354.0 L323,354.0 L322,354.0 L321,354.0 L320,354.0 L319,354.0 L318,354.0 L317,354.0 L316,354.0 L315,354.0 L314,354.0 L313,354.0 L312,354.0 L311,354.0 L310,354.0 L309,354.0 L308,354.0 L307,354.0 L306,354.0 L305,354.0 L304,354.0 L303,354.0 L302,354.0 L301,354.0 L300,354.0 L299,354.0 L298,354.0 L297,354.0 L296,354.0 L295,354.0 L294,354.0 L293,354.0 L292,354.0 L291,354.0 L290,354.0 L289,354.0 L288,354.0 L287,354.0 L286,354.0 L285,354.0 L284,354.0 L283,354.0 L282,354.0 L281,354.0 L280,354.0 L279,354.0 L278,354.0 L277,354.0 L276,354.0 L275,354.0 L274,354.0 L273,354.0 L272,354.0 L271,354.0 L270,354.0 L269,354.0 L268,354.0 L267,354.0 L266,354.0 L265,354.0 L264,354.0 L263,354.2 L262,354.5 L261,354.4 L260,355.2 L259,355.9 L258,355.5 L257,356.4 L256,356.8 L255,355.2 L254,354.5 L253,354.2 L252,354.4 L251,354.7 L250,354.5 L249,355.0 L248,355.7 L247,356.0 L246,356.7 L245,357.3 L244,355.4 L243,355.4 L242,355.3 L241,356.1 L240,356.6 L239,357.7 L238,358.6 L237,356.5 L236,355.3 L235,354.7 L234,354.3 L233,354.9 L232,354.9 L231,354.8 L230,355.0 L229,355.3 L228,354.9 L227,354.8 L226,354.8 L225,354.4 L224,354.7 L223,355.1 L222,355.1 L221,355.0 L220,355.1 L219,355.2 L218,355.3 L217,356.2 L216,356.2 L215,355.8 L214,356.0 L213,355.9 L212,356.6 L211,356.6 L210,356.8 L209,356.5 L208,356.4 L207,356.1 L206,357.0 L205,356.5 L204,356.4 L203,356.3 L202,356.9 L201,356.2 L200,356.3 L199,356.3 L198,356.6 L197,356.1 L196,356.7 L195,356.4 L194,356.3 L193,356.8 L192,356.9 L191,356.5 L190,356.5 L189,355.7 L188,356.3 L187,356.0 L186,356.4 L185,356.2 L184,355.2 L183,355.8 L182,356.3 L181,356.9 L180,357.2 L179,358.6 L178,359.2 L177,360.5 L176,357.6 L175,355.3 L174,354.6 L173,354.0 L172,354.0 L171,354.0 L170,354.0 L169,354.0 L168,354.0 L167,354.0 L166,354.0 L165,354.0 L164,354.0 L163,354.0 L162,354.0 L161,354.0 L160,354.0 L159,354.0 L158,354.0 L157,354.0 L156,354.0 L155,354.0 L154,354.0 L153,354.0 L152,354.0 L151,354.0 L150,354.0 L149,354.0 L148,354.0 L147,354.0 L146,354.0 L145,354.0 L144,354.0 L143,354.0 L142,354.0 L141,354.0 L140,354.0 L139,354.0 L138,354.0 L137,354.0 L136,354.0 L135,354.0 L134,354.0 L133,354.0 L132,354.0 L131,354.0 L130,354.0 L129,354.0 L128,354.0 L127,354.0 L126,354.0 L125,354.0 L124,354.0 L123,354.0 L122,354.0 L121,354.0 L120,354.0 L119,354.0 L118,354.0 L117,354.0 L116,354.0 L115,354.0 L114,354.0 L113,354.0 L112,354.0 L111,354.0 L110,354.0 L109,354.0 L108,354.0 L107,354.0 L106,354.0 L105,354.0 L104,354.0 L103,354.0 L102,354.0 L101,354.0 L100,354.0 L99,354.0 L98,354.0 L97,354.0 L96,354.0 L95,354.0 L94,354.0 L93,354.0 L92,354.0 L91,354.0 L90,354.0 L89,354.0 L88,354.0 L87,354.0 L86,354.0 L85,354.0 L84,354.0 L83,354.0 L82,354.0 L81,354.0 L80,354.0 L79,354.0 L78,354.0 L77,354.0 L76,354.0 L75,354.0 L74,354.0 L73,354.2 L72,354.4 L71,354.7 L70,355.0 L69,355.1 L68,356.1 L67,356.3 L66,356.6 L65,358.2 L64,355.7 L63,354.9 L62,354.2 L61,354.4 L60,354.7 L59,355.4 L58,355.4 L57,355.9 L56,356.1 L55,357.2 L54,358.0 L53,355.7 L52,354.7 L51,354.0 L50,354.0 L49,354.0 L48,354.0 L47,354.0 L46,354.0 L45,354.2 L44,354.3 L43,354.4 L42,354.4 L41,354.5 L40,354.6 L39,354.8 L38,354.8 L37,355.2 L36,355.7 L35,355.5 L34,355.5 L33,355.7 L32,356.4 L31,356.4 L30,356.7 L29,356.8 L28,356.4 L27,357.0 L26,356.5 L25,356.3 L24,356.3 L23,356.3 L22,356.8 L21,355.9 L20,356.7 L19,356.1 L18,356.3 L17,356.6 L16,356.3 L15,356.0 L14,356.2 L13,357.1 L12,356.9 L11,356.7 L10,356.8 L9,357.3 L8,356.9 L7,357.4 L6,356.9 L5,357.1 L4,357.1 L3,356.5 L2,356.8 L1,356.1 L0,356.0 Z" fill="#5C2B26"/><path d="M0,415.1 L0,412.0 L1,410.9 L2,411.0 L3,410.6 L4,411.1 L5,410.2 L6,410.9 L7,410.0 L8,410.4 L9,410.6 L10,410.5 L11,410.2 L12,411.1 L13,411.4 L14,411.2 L15,411.8 L16,412.0 L17,411.9 L18,412.0 L19,411.9 L20,411.8 L21,412.0 L22,411.4 L23,411.7 L24,411.4 L25,411.7 L26,411.5 L27,411.8 L28,411.5 L29,411.8 L30,411.1 L31,411.4 L32,411.9 L33,411.8 L34,411.5 L35,412.5 L36,412.1 L37,412.7 L38,412.9 L39,413.1 L40,413.3 L41,413.3 L42,413.4 L43,413.5 L44,413.5 L45,413.6 L46,413.8 L47,413.8 L48,413.8 L49,413.8 L50,413.8 L51,413.8 L52,413.3 L53,411.9 L54,410.7 L55,411.2 L56,411.6 L57,411.8 L58,412.8 L59,412.7 L60,413.3 L61,413.6 L62,413.8 L63,413.3 L64,412.0 L65,410.5 L66,411.3 L67,411.9 L68,412.7 L69,413.0 L70,413.4 L71,413.3 L72,413.6 L73,413.8 L74,413.8 L75,413.8 L76,413.8 L77,413.8 L78,413.8 L79,413.8 L80,413.8 L81,413.8 L82,413.8 L83,413.8 L84,413.8 L85,413.8 L86,413.8 L87,413.8 L88,413.8 L89,413.8 L90,413.8 L91,413.8 L92,413.8 L93,413.8 L94,413.8 L95,413.8 L96,413.8 L97,413.8 L98,413.8 L99,413.8 L100,413.8 L101,413.8 L102,413.8 L103,413.8 L104,413.8 L105,413.8 L106,413.8 L107,413.8 L108,413.8 L109,413.8 L110,413.8 L111,413.8 L112,413.8 L113,413.8 L114,413.8 L115,413.8 L116,413.8 L117,413.8 L118,413.8 L119,413.8 L120,413.8 L121,413.8 L122,413.8 L123,413.8 L124,413.8 L125,413.8 L126,413.8 L127,413.8 L128,413.8 L129,413.8 L130,413.8 L131,413.8 L132,413.8 L133,413.8 L134,413.8 L135,413.8 L136,413.8 L137,413.8 L138,413.8 L139,413.8 L140,413.8 L141,413.8 L142,413.8 L143,413.8 L144,413.8 L145,413.8 L146,413.8 L147,413.8 L148,413.8 L149,413.8 L150,413.8 L151,413.8 L152,413.8 L153,413.8 L154,413.8 L155,413.8 L156,413.8 L157,413.8 L158,413.8 L159,413.8 L160,413.8 L161,413.8 L162,413.8 L163,413.8 L164,413.8 L165,413.8 L166,413.8 L167,413.8 L168,413.8 L169,413.8 L170,413.8 L171,413.8 L172,413.8 L173,413.8 L174,413.3 L175,412.0 L176,410.9 L177,408.4 L178,409.5 L179,409.6 L180,410.3 L181,411.1 L182,412.1 L183,412.6 L184,412.9 L185,411.9 L186,412.2 L187,411.8 L188,411.9 L189,411.1 L190,411.1 L191,411.4 L192,411.6 L193,410.9 L194,411.5 L195,411.4 L196,411.7 L197,411.3 L198,411.1 L199,411.1 L200,411.4 L201,411.1 L202,411.6 L203,411.3 L204,411.5 L205,411.2 L206,411.6 L207,411.6 L208,411.4 L209,411.5 L210,411.2 L211,411.4 L212,411.2 L213,411.4 L214,411.4 L215,411.4 L216,411.9 L217,412.1 L218,411.6 L219,412.5 L220,412.0 L221,412.2 L222,413.0 L223,412.3 L224,412.3 L225,412.6 L226,412.5 L227,412.4 L228,413.1 L229,412.8 L230,412.8 L231,412.5 L232,412.5 L233,412.5 L234,412.8 L235,412.5 L236,413.3 L237,412.1 L238,410.4 L239,411.5 L240,412.3 L241,412.6 L242,412.8 L243,413.4 L244,411.9 L245,410.5 L246,411.1 L247,411.7 L248,412.1 L249,412.7 L250,413.5 L251,413.3 L252,413.6 L253,413.8 L254,413.5 L255,412.3 L256,410.9 L257,411.7 L258,412.1 L259,412.4 L260,413.4 L261,413.2 L262,413.5 L263,413.7 L264,413.8 L265,413.8 L266,413.8 L267,413.8 L268,413.8 L269,413.8 L270,413.8 L271,413.8 L272,413.8 L273,413.8 L274,413.8 L275,413.8 L276,413.8 L277,413.8 L278,413.8 L279,413.8 L280,413.8 L281,413.8 L282,413.8 L283,413.8 L284,413.8 L285,413.8 L286,413.8 L287,413.8 L288,413.8 L289,413.8 L290,413.8 L291,413.8 L292,413.8 L293,413.8 L294,413.8 L295,413.8 L296,413.8 L297,413.8 L298,413.8 L299,413.8 L300,413.8 L301,413.8 L302,413.8 L303,413.8 L304,413.8 L305,413.8 L306,413.8 L307,413.8 L308,413.8 L309,413.8 L310,413.8 L311,413.8 L312,413.8 L313,413.8 L314,413.8 L315,413.8 L316,413.8 L317,413.8 L318,413.8 L319,413.8 L320,413.8 L321,413.8 L322,413.8 L323,413.8 L324,413.8 L325,413.8 L326,413.8 L327,413.8 L328,413.8 L329,413.8 L330,413.6 L331,412.4 L332,411.5 L333,410.8 L334,411.3 L335,411.4 L336,412.4 L337,412.3 L338,412.4 L339,412.2 L340,410.7 L341,411.3 L342,411.6 L343,412.0 L344,412.6 L345,412.9 L346,413.3 L347,413.6 L348,413.6 L349,413.1 L350,411.6 L351,409.3 L352,409.7 L353,410.9 L354,411.3 L355,412.3 L356,412.8 L357,412.9 L358,412.9 L359,413.3 L360,413.6 L361,413.8 L362,413.8 L363,413.8 L364,413.8 L365,413.8 L366,413.8 L367,413.7 L368,412.7 L369,411.4 L370,412.3 L371,412.5 L372,412.9 L373,413.2 L374,413.5 L375,413.7 L376,413.8 L377,413.8 L378,413.8 L379,413.3 L380,412.3 L381,411.0 L382,410.8 L383,411.7 L384,410.9 L385,410.9 L386,411.7 L387,411.2 L388,410.8 L389,410.6 L390,411.1 L391,411.2 L392,411.2 L393,410.5 L394,411.2 L395,410.8 L396,411.3 L397,410.9 L398,410.5 L399,411.4 L400,410.7 L401,411.1 L402,410.8 L403,411.1 L404,411.6 L405,411.1 L406,411.6 L407,412.2 L408,412.3 L409,411.9 L410,412.1 L411,412.4 L412,412.7 L413,412.6 L414,412.8 L415,412.4 L416,413.3 L417,412.6 L418,412.5 L419,413.3 L420,412.5 L421,412.8 L422,412.6 L423,413.2 L424,413.2 L425,413.1 L426,413.8 L427,413.8 L428,413.8 L429,413.8 L430,413.8 L431,413.8 L432,413.8 L433,413.8 L434,413.3 L435,412.4 L436,410.1 L437,411.2 L438,411.9 L439,412.3 L440,412.9 L441,413.5 L442,413.3 L443,413.6 L444,413.8 L445,413.8 L446,413.5 L447,413.0 L448,410.8 L449,411.9 L450,411.7 L451,412.8 L452,413.2 L453,413.2 L454,413.5 L455,413.7 L456,413.8 L457,413.8 L458,413.8 L459,413.8 L460,413.8 L461,413.8 L462,413.8 L463,413.8 L464,413.8 L465,413.8 L466,413.8 L467,413.8 L468,413.8 L469,413.8 L470,413.8 L471,413.8 L472,413.8 L473,413.8 L474,413.8 L475,413.8 L476,413.8 L477,413.8 L478,413.8 L479,413.8 L480,413.8 L481,413.8 L482,413.8 L483,413.8 L484,413.8 L485,413.8 L486,413.8 L487,413.8 L488,413.8 L489,413.8 L490,413.8 L491,413.8 L492,413.8 L493,413.8 L494,413.8 L495,413.8 L496,413.8 L497,413.8 L498,413.8 L499,413.8 L500,413.8 L501,413.8 L502,413.8 L503,413.8 L504,413.8 L505,413.8 L506,413.8 L507,413.8 L508,413.8 L509,413.8 L510,413.8 L511,413.8 L512,413.8 L513,413.8 L514,413.8 L515,413.8 L516,413.8 L517,413.8 L518,413.8 L519,413.8 L520,413.8 L521,413.8 L522,413.8 L523,413.8 L524,413.8 L525,413.8 L526,413.8 L527,413.8 L528,413.8 L529,413.8 L530,413.8 L531,413.8 L532,413.8 L533,413.8 L534,413.8 L535,413.8 L536,413.8 L537,413.8 L538,413.8 L539,413.8 L540,413.8 L541,413.8 L542,413.8 L543,413.8 L544,413.8 L545,413.8 L546,413.8 L547,413.8 L548,413.8 L549,413.8 L550,413.8 L551,413.8 L552,413.8 L553,413.8 L554,413.8 L555,413.8 L556,413.8 L557,413.8 L558,413.2 L559,412.1 L560,410.7 L561,409.0 L562,409.3 L563,410.2 L564,410.9 L565,411.6 L566,411.8 L567,412.2 L568,412.9 L569,413.3 L570,411.4 L571,412.0 L572,411.2 L573,411.4 L574,411.0 L575,411.1 L576,411.4 L577,411.5 L578,410.6 L579,411.4 L580,411.0 L581,411.1 L582,411.1 L583,410.7 L584,410.4 L585,411.2 L586,410.8 L587,411.2 L588,411.0 L589,411.2 L590,411.5 L591,411.6 L592,411.7 L593,411.1 L594,411.6 L595,412.0 L596,411.4 L597,411.5 L598,412.2 L599,412.6 L600,412.7 L601,413.0 L602,412.9 L603,413.2 L604,413.1 L605,413.1 L606,412.8 L607,412.5 L608,412.7 L609,413.1 L610,413.1 L611,413.0 L612,413.1 L613,413.8 L614,413.8 L615,413.8 L616,413.8 L617,413.8 L618,413.3 L619,412.4 L620,410.8 L621,411.7 L622,412.0 L623,411.8 L624,413.0 L625,413.0 L626,413.3 L627,412.4 L628,410.7 L629,412.0 L630,412.4 L631,412.8 L632,413.0 L633,413.2 L634,413.5 L635,413.7 L636,413.5 L637,412.6 L638,410.6 L639,411.3 L640,411.8 L641,413.1 L642,413.4 L643,413.2 L644,413.5 L645,413.7 L646,413.8 L647,413.8 L648,413.8 L649,413.8 L650,413.8 L651,413.8 L652,413.8 L653,413.8 L654,413.8 L655,413.8 L656,413.8 L657,413.8 L658,413.8 L659,413.8 L660,413.8 L661,413.8 L662,413.8 L663,413.8 L664,413.8 L665,413.8 L666,413.8 L667,413.8 L668,413.8 L669,413.8 L670,413.8 L671,413.8 L672,413.8 L673,413.8 L674,413.8 L675,413.8 L676,413.8 L677,413.8 L678,413.8 L679,413.8 L680,413.8 L681,413.8 L682,413.8 L683,413.8 L684,413.8 L685,413.8 L686,413.8 L687,413.8 L688,413.8 L689,413.8 L690,413.8 L691,413.8 L692,413.8 L693,413.8 L694,413.8 L695,413.8 L696,413.8 L697,413.8 L698,413.8 L699,413.8 L700,413.8 L701,413.8 L702,413.8 L703,413.8 L704,413.8 L705,413.8 L706,413.8 L707,413.8 L708,413.8 L709,413.8 L710,413.8 L711,413.7 L712,412.6 L713,411.1 L714,411.0 L715,411.4 L716,412.5 L717,412.6 L718,412.4 L719,413.2 L720,411.9 L721,410.2 L722,410.8 L723,412.0 L724,412.7 L725,413.0 L726,413.0 L727,413.3 L728,413.6 L729,413.8 L730,412.9 L731,411.5 L732,409.9 L733,410.7 L734,411.2 L735,412.0 L736,412.3 L737,413.0 L738,412.1 L739,412.5 L740,411.6 L741,411.8 L742,412.0 L743,412.1 L744,412.0 L745,411.6 L746,411.5 L747,412.1 L748,412.3 L749,411.9 L750,412.0 L751,412.3 L752,412.6 L753,412.4 L754,413.2 L755,413.1 L756,412.9 L757,412.4 L758,412.8 L759,412.5 L760,412.9 L760,417.3 L759,417.7 L758,417.4 L757,417.8 L756,417.3 L755,417.1 L754,417.0 L753,417.8 L752,417.6 L751,417.9 L750,418.2 L749,418.3 L748,417.9 L747,418.1 L746,418.7 L745,418.6 L744,418.2 L743,418.1 L742,418.2 L741,418.4 L740,418.6 L739,417.7 L738,418.1 L737,417.2 L736,417.9 L735,418.2 L734,419.0 L733,419.5 L732,420.3 L731,418.7 L730,417.3 L729,416.4 L728,416.6 L727,416.9 L726,417.2 L725,417.2 L724,417.5 L723,418.2 L722,419.4 L721,420.0 L720,418.3 L719,417.0 L718,417.8 L717,417.6 L716,417.7 L715,418.8 L714,419.2 L713,419.1 L712,417.6 L711,416.5 L710,416.4 L709,416.4 L708,416.4 L707,416.4 L706,416.4 L705,416.4 L704,416.4 L703,416.4 L702,416.4 L701,416.4 L700,416.4 L699,416.4 L698,416.4 L697,416.4 L696,416.4 L695,416.4 L694,416.4 L693,416.4 L692,416.4 L691,416.4 L690,416.4 L689,416.4 L688,416.4 L687,416.4 L686,416.4 L685,416.4 L684,416.4 L683,416.4 L682,416.4 L681,416.4 L680,416.4 L679,416.4 L678,416.4 L677,416.4 L676,416.4 L675,416.4 L674,416.4 L673,416.4 L672,416.4 L671,416.4 L670,416.4 L669,416.4 L668,416.4 L667,416.4 L666,416.4 L665,416.4 L664,416.4 L663,416.4 L662,416.4 L661,416.4 L660,416.4 L659,416.4 L658,416.4 L657,416.4 L656,416.4 L655,416.4 L654,416.4 L653,416.4 L652,416.4 L651,416.4 L650,416.4 L649,416.4 L648,416.4 L647,416.4 L646,416.4 L645,416.5 L644,416.7 L643,417.0 L642,416.8 L641,417.1 L640,418.4 L639,418.9 L638,419.6 L637,417.6 L636,416.7 L635,416.5 L634,416.7 L633,417.0 L632,417.2 L631,417.4 L630,417.8 L629,418.2 L628,419.5 L627,417.8 L626,416.9 L625,417.2 L624,417.2 L623,418.4 L622,418.2 L621,418.5 L620,419.4 L619,417.8 L618,416.9 L617,416.4 L616,416.4 L615,416.4 L614,416.4 L613,416.4 L612,417.1 L611,417.2 L610,417.1 L609,417.1 L608,417.5 L607,417.7 L606,417.4 L605,417.1 L604,417.1 L603,417.0 L602,417.3 L601,417.2 L600,417.5 L599,417.6 L598,418.0 L597,418.7 L596,418.8 L595,418.2 L594,418.6 L593,419.1 L592,418.5 L591,418.6 L590,418.7 L589,419.0 L588,419.2 L587,419.0 L586,419.4 L585,419.0 L584,419.8 L583,419.5 L582,419.1 L581,419.1 L580,419.2 L579,418.8 L578,419.6 L577,418.7 L576,418.8 L575,419.1 L574,419.2 L573,418.8 L572,419.0 L571,418.2 L570,418.8 L569,416.9 L568,417.3 L567,418.0 L566,418.4 L565,418.6 L564,419.3 L563,420.0 L562,420.9 L561,421.2 L560,419.5 L559,418.1 L558,417.0 L557,416.4 L556,416.4 L555,416.4 L554,416.4 L553,416.4 L552,416.4 L551,416.4 L550,416.4 L549,416.4 L548,416.4 L547,416.4 L546,416.4 L545,416.4 L544,416.4 L543,416.4 L542,416.4 L541,416.4 L540,416.4 L539,416.4 L538,416.4 L537,416.4 L536,416.4 L535,416.4 L534,416.4 L533,416.4 L532,416.4 L531,416.4 L530,416.4 L529,416.4 L528,416.4 L527,416.4 L526,416.4 L525,416.4 L524,416.4 L523,416.4 L522,416.4 L521,416.4 L520,416.4 L519,416.4 L518,416.4 L517,416.4 L516,416.4 L515,416.4 L514,416.4 L513,416.4 L512,416.4 L511,416.4 L510,416.4 L509,416.4 L508,416.4 L507,416.4 L506,416.4 L505,416.4 L504,416.4 L503,416.4 L502,416.4 L501,416.4 L500,416.4 L499,416.4 L498,416.4 L497,416.4 L496,416.4 L495,416.4 L494,416.4 L493,416.4 L492,416.4 L491,416.4 L490,416.4 L489,416.4 L488,416.4 L487,416.4 L486,416.4 L485,416.4 L484,416.4 L483,416.4 L482,416.4 L481,416.4 L480,416.4 L479,416.4 L478,416.4 L477,416.4 L476,416.4 L475,416.4 L474,416.4 L473,416.4 L472,416.4 L471,416.4 L470,416.4 L469,416.4 L468,416.4 L467,416.4 L466,416.4 L465,416.4 L464,416.4 L463,416.4 L462,416.4 L461,416.4 L460,416.4 L459,416.4 L458,416.4 L457,416.4 L456,416.4 L455,416.5 L454,416.7 L453,417.0 L452,417.0 L451,417.4 L450,418.5 L449,418.3 L448,419.4 L447,417.2 L446,416.7 L445,416.4 L444,416.4 L443,416.6 L442,416.9 L441,416.7 L440,417.3 L439,417.9 L438,418.3 L437,419.0 L436,420.1 L435,417.8 L434,416.9 L433,416.4 L432,416.4 L431,416.4 L430,416.4 L429,416.4 L428,416.4 L427,416.4 L426,416.4 L425,417.1 L424,417.0 L423,417.0 L422,417.6 L421,417.4 L420,417.7 L419,416.9 L418,417.7 L417,417.6 L416,416.9 L415,417.8 L414,417.4 L413,417.6 L412,417.5 L411,417.8 L410,418.1 L409,418.3 L408,417.9 L407,418.0 L406,418.6 L405,419.1 L404,418.6 L403,419.1 L402,419.4 L401,419.1 L400,419.5 L399,418.8 L398,419.7 L397,419.3 L396,418.9 L395,419.4 L394,419.0 L393,419.7 L392,419.0 L391,419.0 L390,419.1 L389,419.6 L388,419.4 L387,419.0 L386,418.5 L385,419.3 L384,419.3 L383,418.5 L382,419.4 L381,419.2 L380,417.9 L379,416.9 L378,416.4 L377,416.4 L376,416.4 L375,416.5 L374,416.7 L373,417.0 L372,417.3 L371,417.7 L370,417.9 L369,418.8 L368,417.5 L367,416.5 L366,416.4 L365,416.4 L364,416.4 L363,416.4 L362,416.4 L361,416.4 L360,416.6 L359,416.9 L358,417.3 L357,417.3 L356,417.4 L355,417.9 L354,418.9 L353,419.3 L352,420.5 L351,420.9 L350,418.6 L349,417.1 L348,416.6 L347,416.6 L346,416.9 L345,417.3 L344,417.6 L343,418.2 L342,418.6 L341,418.9 L340,419.5 L339,418.0 L338,417.8 L337,417.9 L336,417.8 L335,418.8 L334,418.9 L333,419.4 L332,418.7 L331,417.8 L330,416.6 L329,416.4 L328,416.4 L327,416.4 L326,416.4 L325,416.4 L324,416.4 L323,416.4 L322,416.4 L321,416.4 L320,416.4 L319,416.4 L318,416.4 L317,416.4 L316,416.4 L315,416.4 L314,416.4 L313,416.4 L312,416.4 L311,416.4 L310,416.4 L309,416.4 L308,416.4 L307,416.4 L306,416.4 L305,416.4 L304,416.4 L303,416.4 L302,416.4 L301,416.4 L300,416.4 L299,416.4 L298,416.4 L297,416.4 L296,416.4 L295,416.4 L294,416.4 L293,416.4 L292,416.4 L291,416.4 L290,416.4 L289,416.4 L288,416.4 L287,416.4 L286,416.4 L285,416.4 L284,416.4 L283,416.4 L282,416.4 L281,416.4 L280,416.4 L279,416.4 L278,416.4 L277,416.4 L276,416.4 L275,416.4 L274,416.4 L273,416.4 L272,416.4 L271,416.4 L270,416.4 L269,416.4 L268,416.4 L267,416.4 L266,416.4 L265,416.4 L264,416.4 L263,416.5 L262,416.7 L261,417.0 L260,416.8 L259,417.8 L258,418.1 L257,418.5 L256,419.3 L255,417.9 L254,416.7 L253,416.4 L252,416.6 L251,416.9 L250,416.7 L249,417.5 L248,418.1 L247,418.5 L246,419.1 L245,419.7 L244,418.3 L243,416.8 L242,417.4 L241,417.6 L240,417.9 L239,418.7 L238,419.8 L237,418.1 L236,416.9 L235,417.7 L234,417.4 L233,417.7 L232,417.7 L231,417.7 L230,417.4 L229,417.4 L228,417.1 L227,417.8 L226,417.7 L225,417.6 L224,417.9 L223,417.9 L222,417.2 L221,418.0 L220,418.2 L219,417.7 L218,418.6 L217,418.1 L216,418.3 L215,418.8 L214,418.8 L213,418.8 L212,419.0 L211,418.8 L210,419.0 L209,418.7 L208,418.8 L207,418.6 L206,418.6 L205,419.0 L204,418.7 L203,418.9 L202,418.6 L201,419.1 L200,418.8 L199,419.1 L198,419.1 L197,418.9 L196,418.5 L195,418.8 L194,418.7 L193,419.3 L192,418.6 L191,418.8 L190,419.1 L189,419.1 L188,418.3 L187,418.4 L186,418.0 L185,418.3 L184,417.3 L183,417.6 L182,418.1 L181,419.1 L180,419.9 L179,420.6 L178,420.7 L177,421.8 L176,419.3 L175,418.2 L174,416.9 L173,416.4 L172,416.4 L171,416.4 L170,416.4 L169,416.4 L168,416.4 L167,416.4 L166,416.4 L165,416.4 L164,416.4 L163,416.4 L162,416.4 L161,416.4 L160,416.4 L159,416.4 L158,416.4 L157,416.4 L156,416.4 L155,416.4 L154,416.4 L153,416.4 L152,416.4 L151,416.4 L150,416.4 L149,416.4 L148,416.4 L147,416.4 L146,416.4 L145,416.4 L144,416.4 L143,416.4 L142,416.4 L141,416.4 L140,416.4 L139,416.4 L138,416.4 L137,416.4 L136,416.4 L135,416.4 L134,416.4 L133,416.4 L132,416.4 L131,416.4 L130,416.4 L129,416.4 L128,416.4 L127,416.4 L126,416.4 L125,416.4 L124,416.4 L123,416.4 L122,416.4 L121,416.4 L120,416.4 L119,416.4 L118,416.4 L117,416.4 L116,416.4 L115,416.4 L114,416.4 L113,416.4 L112,416.4 L111,416.4 L110,416.4 L109,416.4 L108,416.4 L107,416.4 L106,416.4 L105,416.4 L104,416.4 L103,416.4 L102,416.4 L101,416.4 L100,416.4 L99,416.4 L98,416.4 L97,416.4 L96,416.4 L95,416.4 L94,416.4 L93,416.4 L92,416.4 L91,416.4 L90,416.4 L89,416.4 L88,416.4 L87,416.4 L86,416.4 L85,416.4 L84,416.4 L83,416.4 L82,416.4 L81,416.4 L80,416.4 L79,416.4 L78,416.4 L77,416.4 L76,416.4 L75,416.4 L74,416.4 L73,416.4 L72,416.6 L71,416.9 L70,416.8 L69,417.2 L68,417.5 L67,418.3 L66,418.9 L65,419.7 L64,418.2 L63,416.9 L62,416.4 L61,416.6 L60,416.9 L59,417.5 L58,417.4 L57,418.4 L56,418.6 L55,419.0 L54,419.5 L53,418.3 L52,416.9 L51,416.4 L50,416.4 L49,416.4 L48,416.4 L47,416.4 L46,416.4 L45,416.6 L44,416.7 L43,416.7 L42,416.8 L41,416.9 L40,416.9 L39,417.1 L38,417.3 L37,417.5 L36,418.1 L35,417.7 L34,418.7 L33,418.4 L32,418.3 L31,418.8 L30,419.1 L29,418.4 L28,418.7 L27,418.4 L26,418.7 L25,418.5 L24,418.8 L23,418.5 L22,418.8 L21,418.2 L20,418.4 L19,418.3 L18,418.2 L17,418.3 L16,418.2 L15,418.4 L14,419.0 L13,418.8 L12,419.1 L11,420.0 L10,419.7 L9,419.6 L8,419.8 L7,420.2 L6,419.3 L5,420.0 L4,419.1 L3,419.6 L2,419.2 L1,419.3 L0,418.2 Z" fill="#5C2B26"/></svg>
<div class="a" style="left:761px;top:0px;width:3px;height:717px;background:#E3D7C3"></div>
<div class="a" style="left:0px;top:0px;width:1.3px;height:717px;background:#E6DAC6"></div>
<div class="a" style="left:906px;top:0px;width:10px;height:446px;background:#FFD89C"></div>
<div class="a" style="left:0px;top:717px;width:906px;height:51px;background:#454545"></div>
<div class="a" style="left:-1.0px;top:718px;width:2px;height:17px;background:#9a918a"></div>
<div class="a" style="left:-1.0px;top:733px;width:5px;height:2px;background:#9a918a"></div>
<div class="a" style="left:49.8px;top:718px;width:2px;height:4px;background:#9a918a"></div>
<div class="a" style="left:100.6px;top:718px;width:2px;height:4px;background:#9a918a"></div>
<div class="a" style="left:151.4px;top:718px;width:2px;height:4px;background:#9a918a"></div>
<div class="a" style="left:202.2px;top:718px;width:2px;height:4px;background:#9a918a"></div>
<div class="a" style="left:253.0px;top:718px;width:2px;height:17px;background:#9a918a"></div>
<div class="a" style="left:253.0px;top:733px;width:5px;height:2px;background:#9a918a"></div>
<div class="a" style="left:303.8px;top:718px;width:2px;height:4px;background:#9a918a"></div>
<div class="a" style="left:354.6px;top:718px;width:2px;height:4px;background:#9a918a"></div>
<div class="a" style="left:405.4px;top:718px;width:2px;height:4px;background:#9a918a"></div>
<div class="a" style="left:456.2px;top:718px;width:2px;height:4px;background:#9a918a"></div>
<div class="a" style="left:507.0px;top:718px;width:2px;height:17px;background:#9a918a"></div>
<div class="a" style="left:507.0px;top:733px;width:5px;height:2px;background:#9a918a"></div>
<div class="a" style="left:557.8px;top:718px;width:2px;height:4px;background:#9a918a"></div>
<div class="a" style="left:608.6px;top:718px;width:2px;height:4px;background:#9a918a"></div>
<div class="a" style="left:659.4px;top:718px;width:2px;height:4px;background:#9a918a"></div>
<div class="a" style="left:710.2px;top:718px;width:2px;height:4px;background:#9a918a"></div>
<div class="a" style="left:761.0px;top:718px;width:2px;height:17px;background:#9a918a"></div>
<div class="a" style="left:761.0px;top:733px;width:5px;height:2px;background:#9a918a"></div>
<div class="a" style="left:811.8px;top:718px;width:2px;height:4px;background:#9a918a"></div>
<div class="a" style="left:862.6px;top:718px;width:2px;height:4px;background:#9a918a"></div>
<div class="a t" style="left:6.8px;top:724.0px;font-size:24px;color:#EADFC9;transform:scaleX(1.0511);-webkit-text-stroke:0.45px #EADFC9">4:00</div>
<div class="a t" style="left:260.8px;top:724.0px;font-size:24px;color:#EADFC9;transform:scaleX(1.0511);-webkit-text-stroke:0.45px #EADFC9">4:05</div>
<div class="a t" style="left:514.8px;top:724.0px;font-size:24px;color:#EADFC9;transform:scaleX(1.0511);-webkit-text-stroke:0.45px #EADFC9">4:10</div>
<div class="a t" style="left:768.8px;top:724.0px;font-size:24px;color:#EADFC9;transform:scaleX(1.0511);-webkit-text-stroke:0.45px #EADFC9">4:15</div>
<svg class="a" style="left:0;top:719px" width="10" height="11"><polygon points="0,0 9.5,10.5 0,10.5" fill="#18B4D4"/></svg>
<div class="a t" style="left:830.0px;top:669.4px;font-size:40px;color:#96908a;font-weight:bold;transform:scaleX(1.1429)">1/2</div>
<div class="a" style="left:0px;top:768px;width:1258px;height:5px;background:#B5AA9C"></div>
<div class="a" style="left:918px;top:3px;width:238px;height:41.5px;background:#FFF033"></div>
<svg class="a" style="left:923.2px;top:7.800000000000001px" width="32" height="32" viewBox="0 0 32 32"><circle cx="16" cy="16" r="14.6" fill="none" stroke="#3a3608" stroke-width="2.3"/><polygon points="12.3,8.3 23.5,16 12.3,23.7" fill="#3a3608"/></svg>
<div class="a t" style="left:963.3px;top:12.3px;font-size:24px;color:#3a3608;letter-spacing:0.95px;transform:scaleX(1.0400);-webkit-text-stroke:0.9px #3a3608">Gated Texture</div>
<div class="a" style="left:918px;top:49px;width:238px;height:41.5px;background:#FFF033"></div>
<svg class="a" style="left:923.2px;top:53.8px" width="32" height="32" viewBox="0 0 32 32"><circle cx="16" cy="16" r="14.6" fill="none" stroke="#3a3608" stroke-width="2.3"/><polygon points="12.3,8.3 23.5,16 12.3,23.7" fill="#3a3608"/></svg>
<div class="a t" style="left:963.2px;top:58.3px;font-size:24px;color:#3a3608;letter-spacing:-0.30px;-webkit-text-stroke:0.9px #3a3608">Pad</div>
<div class="a" style="left:918px;top:95px;width:238px;height:41.5px;background:#FFF033"></div>
<svg class="a" style="left:923.2px;top:99.8px" width="32" height="32" viewBox="0 0 32 32"><circle cx="16" cy="16" r="14.6" fill="none" stroke="#3a3608" stroke-width="2.3"/><polygon points="12.3,8.3 23.5,16 12.3,23.7" fill="#3a3608"/></svg>
<div class="a t" style="left:963.3px;top:104.3px;font-size:24px;color:#3a3608;letter-spacing:0.26px;transform:scaleX(1.0400);-webkit-text-stroke:0.9px #3a3608">Sweep Chord</div>
<div class="a" style="left:918px;top:141px;width:238px;height:41.5px;background:#FFF033"></div>
<svg class="a" style="left:923.2px;top:145.8px" width="32" height="32" viewBox="0 0 32 32"><circle cx="16" cy="16" r="14.6" fill="none" stroke="#3a3608" stroke-width="2.3"/><polygon points="12.3,8.3 23.5,16 12.3,23.7" fill="#3a3608"/></svg>
<div class="a t" style="left:963.3px;top:150.3px;font-size:24px;color:#3a3608;letter-spacing:0.79px;transform:scaleX(1.0400);-webkit-text-stroke:0.9px #3a3608">Glitch Chords</div>
<div class="a" style="left:918px;top:187px;width:238px;height:41.5px;background:#FFF033"></div>
<svg class="a" style="left:923.2px;top:191.8px" width="32" height="32" viewBox="0 0 32 32"><circle cx="16" cy="16" r="14.6" fill="none" stroke="#3a3608" stroke-width="2.3"/><polygon points="12.3,8.3 23.5,16 12.3,23.7" fill="#3a3608"/></svg>
<div class="a t" style="left:963.3px;top:196.3px;font-size:24px;color:#3a3608;letter-spacing:0.30px;transform:scaleX(1.0400);-webkit-text-stroke:0.9px #3a3608">Synth One Shot</div>
<div class="a" style="left:918px;top:233px;width:238px;height:41.5px;background:#FFF033"></div>
<svg class="a" style="left:923.2px;top:237.8px" width="32" height="32" viewBox="0 0 32 32"><circle cx="16" cy="16" r="14.6" fill="none" stroke="#3a3608" stroke-width="2.3"/><polygon points="12.3,8.3 23.5,16 12.3,23.7" fill="#3a3608"/></svg>
<div class="a t" style="left:963.3px;top:242.3px;font-size:24px;color:#3a3608;letter-spacing:1.20px;transform:scaleX(1.0400);-webkit-text-stroke:0.9px #3a3608">String</div>
<div class="a" style="left:918px;top:279px;width:238px;height:167px;background:#F8F17A"></div>
<svg class="a" style="left:923.2px;top:284.5px" width="32" height="32" viewBox="0 0 32 32"><circle cx="16" cy="16" r="14.6" fill="none" stroke="#3a3608" stroke-width="2.3"/><polygon points="9,12.5 23,12.5 16,22.5" fill="#3a3608"/></svg>
<div class="a t" style="left:963.3px;top:288.3px;font-size:24px;color:#3a3608;letter-spacing:0.12px;transform:scaleX(1.0400);-webkit-text-stroke:0.9px #3a3608">Synths Re-sam</div>
<div class="a" style="left:933px;top:419px;width:11px;height:2.2px;background:#3a3608"></div>
<div class="a" style="left:933px;top:424px;width:11px;height:2.2px;background:#3a3608"></div>
<div class="a" style="left:933px;top:429px;width:11px;height:2.2px;background:#3a3608"></div>
<div class="a" style="left:906px;top:451px;width:250px;height:29px;overflow:hidden;background:#FF94A4"><svg style="position:absolute;left:5px;top:5.5px" width="32" height="32" viewBox="0 0 32 32"><circle cx="16" cy="16" r="14.6" fill="none" stroke="#3b2226" stroke-width="2.3"/><rect x="8" y="10" width="11" height="2.4" fill="#3b2226"/><rect x="11" y="14.5" width="12" height="2.4" fill="#3b2226"/><rect x="11" y="19" width="12" height="2.4" fill="#3b2226"/></svg></div>
<div class="a" style="left:906px;top:451px;width:250px;height:29px;overflow:hidden">
<div class="a t" style="left:45.2px;top:9.5px;font-size:24px;color:#3b2226;letter-spacing:-0.82px;-webkit-text-stroke:0.9px #3b2226">VOCALS</div>
</div>
<div class="a" style="left:906px;top:487px;width:250px;height:41.5px;background:#CDEFF7"></div>
<svg class="a" style="left:911.2px;top:491.8px" width="32" height="32" viewBox="0 0 32 32"><circle cx="16" cy="16" r="14.6" fill="none" stroke="#333a3c" stroke-width="2.3"/><polygon points="12.3,8.3 23.5,16 12.3,23.7" fill="#333a3c"/></svg>
<div class="a t" style="left:953.2px;top:496.3px;font-size:24px;color:#333a3c;letter-spacing:0.06px;transform:scaleX(1.0400);-webkit-text-stroke:0.9px #333a3c">A Reverb</div>
<div class="a" style="left:906px;top:533px;width:250px;height:41.5px;background:#10A5EE"></div>
<svg class="a" style="left:911.2px;top:537.8px" width="32" height="32" viewBox="0 0 32 32"><circle cx="16" cy="16" r="14.6" fill="none" stroke="#0e2a3a" stroke-width="2.3"/><polygon points="12.3,8.3 23.5,16 12.3,23.7" fill="#0e2a3a"/></svg>
<div class="a t" style="left:953.2px;top:542.3px;font-size:24px;color:#0e2a3a;transform:scaleX(1.0094);-webkit-text-stroke:0.9px #0e2a3a">B Delay</div>
<div class="a" style="left:906px;top:579px;width:250px;height:41.5px;background:#FF94A4"></div>
<svg class="a" style="left:911.2px;top:583.8px" width="32" height="32" viewBox="0 0 32 32"><circle cx="16" cy="16" r="14.6" fill="none" stroke="#3b2226" stroke-width="2.3"/><polygon points="12.3,8.3 23.5,16 12.3,23.7" fill="#3b2226"/></svg>
<div class="a t" style="left:953.2px;top:588.3px;font-size:24px;color:#3b2226;letter-spacing:0.02px;transform:scaleX(1.0400);-webkit-text-stroke:0.9px #3b2226">C Drum - Full Par</div>
<div class="a" style="left:906px;top:625px;width:250px;height:41.5px;background:#FF94A4"></div>
<svg class="a" style="left:911.2px;top:629.8px" width="32" height="32" viewBox="0 0 32 32"><circle cx="16" cy="16" r="14.6" fill="none" stroke="#3b2226" stroke-width="2.3"/><polygon points="12.3,8.3 23.5,16 12.3,23.7" fill="#3b2226"/></svg>
<div class="a t" style="left:953.2px;top:634.3px;font-size:24px;color:#3b2226;transform:scaleX(1.0213);-webkit-text-stroke:0.9px #3b2226">D Bass - Punch a</div>
<div class="a" style="left:906px;top:671px;width:250px;height:41.5px;background:#3f3f3f"></div>
<svg class="a" style="left:911px;top:676px" width="32" height="32" viewBox="0 0 32 32"><circle cx="16" cy="16" r="14.6" fill="none" stroke="#C8C8C8" stroke-width="2.3"/><polygon points="12.3,8.3 23.5,16 12.3,23.7" fill="#C8C8C8"/></svg>
<div class="a t" style="left:956.5px;top:680.5px;font-size:24px;color:#D0D0D0;letter-spacing:0.16px;transform:scaleX(1.0400);-webkit-text-stroke:0.9px #D0D0D0">Main</div>
<div class="a" style="left:1160.5px;top:3px;width:98px;height:41.5px;background:#464646"></div>
<div class="a" style="left:1165.5px;top:8px;width:100px;height:31px;background:#464646;border:2px solid #151515;box-sizing:border-box"></div>
<div class="a" style="left:1160.5px;top:49px;width:98px;height:41.5px;background:#464646"></div>
<div class="a" style="left:1165.5px;top:54px;width:100px;height:31px;background:#464646;border:2px solid #151515;box-sizing:border-box"></div>
<div class="a" style="left:1160.5px;top:95px;width:98px;height:41.5px;background:#464646"></div>
<div class="a" style="left:1165.5px;top:100px;width:100px;height:31px;background:#464646;border:2px solid #151515;box-sizing:border-box"></div>
<div class="a" style="left:1160.5px;top:141px;width:98px;height:41.5px;background:#464646"></div>
<div class="a" style="left:1165.5px;top:146px;width:100px;height:31px;background:#464646;border:2px solid #151515;box-sizing:border-box"></div>
<div class="a" style="left:1160.5px;top:187px;width:98px;height:41.5px;background:#464646"></div>
<div class="a" style="left:1165.5px;top:192px;width:100px;height:31px;background:#464646;border:2px solid #151515;box-sizing:border-box"></div>
<div class="a" style="left:1160.5px;top:233px;width:98px;height:41.5px;background:#464646"></div>
<div class="a" style="left:1165.5px;top:238px;width:100px;height:31px;background:#464646;border:2px solid #151515;box-sizing:border-box"></div>
<div class="a" style="left:1160.5px;top:279px;width:98px;height:167px;background:#464646"></div>
<div class="a" style="left:1165.5px;top:284.5px;width:100px;height:30.5px;background:#484848;border:2px solid #151515;box-sizing:border-box"></div>
<div class="a" style="left:1170px;top:289px;width:5px;height:2.5px;background:#3a3a3a"></div>
<div class="a" style="left:1170px;top:296px;width:5px;height:3px;background:#F2C200"></div>
<div class="a" style="left:1170px;top:301.5px;width:5px;height:9.5px;background:#10E860"></div>
<div class="a" style="left:1177.5px;top:289px;width:5px;height:2.5px;background:#3a3a3a"></div>
<div class="a" style="left:1177.5px;top:296px;width:5px;height:3px;background:#F2C200"></div>
<div class="a" style="left:1177.5px;top:301.5px;width:5px;height:9.5px;background:#10E860"></div>
<div class="a" style="left:1165.5px;top:325px;width:41px;height:31.3px;background:#2a2a2a;border:2px solid #151515;box-sizing:border-box"></div>
<div class="a t" style="left:1176.4px;top:330.0px;font-size:24px;color:#F2E8D5;-webkit-text-stroke:0.45px #F2E8D5">In</div>
<div class="a" style="left:1214px;top:325px;width:60px;height:31.3px;background:#2a2a2a;border:2px solid #151515;box-sizing:border-box"></div>
<div class="a t" style="left:1219.8px;top:330.0px;font-size:24px;color:#F2E8D5;-webkit-text-stroke:0.45px #F2E8D5">Aut</div>
<div class="a" style="left:1165.5px;top:366.5px;width:100px;height:31px;background:#2a2a2a;border:2px solid #151515;box-sizing:border-box"></div>
<div class="a t" style="left:1170.9px;top:371.0px;font-size:24px;color:#F2E8D5;transform:scaleX(1.0103);-webkit-text-stroke:0.45px #F2E8D5">SYNTHS</div>
<div class="a" style="left:1165.5px;top:407px;width:100px;height:31.3px;background:#484848;border:2px solid #151515;box-sizing:border-box"></div>
<div class="a" style="left:1160.5px;top:451px;width:98px;height:29px;background:#464646"></div>
<div class="a" style="left:1165.5px;top:456px;width:100px;height:24px;background:#2a2a2a;border:2px solid #151515;border-bottom:none;box-sizing:border-box"></div>
<div class="a t" style="left:1171.7px;top:459.5px;font-size:24px;color:#F2E8D5;transform:scaleX(1.0577);-webkit-text-stroke:0.45px #F2E8D5">Main</div>
<div class="a" style="left:1160.5px;top:487.5px;width:98px;height:41.5px;background:#464646"></div>
<div class="a" style="left:1165.5px;top:492.5px;width:100px;height:31px;background:#464646;border:2px solid #151515;box-sizing:border-box"></div>
<div class="a" style="left:1160.5px;top:533px;width:98px;height:41.5px;background:#464646"></div>
<div class="a" style="left:1165.5px;top:538px;width:100px;height:31px;background:#464646;border:2px solid #151515;box-sizing:border-box"></div>
<div class="a" style="left:1160.5px;top:579px;width:98px;height:41.5px;background:#464646"></div>
<div class="a" style="left:1165.5px;top:584px;width:100px;height:31px;background:#464646;border:2px solid #151515;box-sizing:border-box"></div>
<div class="a" style="left:1160.5px;top:625px;width:98px;height:41.5px;background:#464646"></div>
<div class="a" style="left:1165.5px;top:630px;width:100px;height:31px;background:#464646;border:2px solid #151515;box-sizing:border-box"></div>
<div class="a" style="left:1160.5px;top:671px;width:98px;height:41.5px;background:#464646"></div>
<div class="a" style="left:1165.5px;top:676px;width:100px;height:31px;background:#2a2a2a;border:2px solid #151515;box-sizing:border-box"></div>
<div class="a" style="left:1170px;top:681px;width:5px;height:2.2px;background:#3a3a3a"></div>
<div class="a" style="left:1170px;top:685px;width:5px;height:2.2px;background:#3a3a3a"></div>
<div class="a" style="left:1170px;top:689.5px;width:5px;height:3px;background:#D8E000"></div>
<div class="a" style="left:1170px;top:695.5px;width:5px;height:7px;background:#10E860"></div>
<div class="a" style="left:1177.5px;top:681px;width:5px;height:2.2px;background:#3a3a3a"></div>
<div class="a" style="left:1177.5px;top:685px;width:5px;height:2.2px;background:#3a3a3a"></div>
<div class="a" style="left:1177.5px;top:689.5px;width:5px;height:3px;background:#D8E000"></div>
<div class="a" style="left:1177.5px;top:695.5px;width:5px;height:7px;background:#10E860"></div>
<div class="a t" style="left:1193.3px;top:681.0px;font-size:24px;color:#F2E8D5;letter-spacing:0.95px;transform:scaleX(1.0800);-webkit-text-stroke:0.45px #F2E8D5">1/2</div>
<div class="a" style="left:906px;top:717px;width:352px;height:51px;background:#484848"></div>
<div class="a" style="left:906.6px;top:727.4px;width:36.3px;height:30.4px;background:#FFAA50;border:2px solid #111;box-sizing:border-box"></div>
<div class="a" style="left:913.7px;top:738.0px;width:2.4px;height:9px;background:#1a1a1a"></div>
<div class="a" style="left:918.5px;top:733.0px;width:2.4px;height:19px;background:#1a1a1a"></div>
<div class="a" style="left:923.2px;top:731.5px;width:2.4px;height:22px;background:#1a1a1a"></div>
<div class="a" style="left:928.0px;top:734.0px;width:2.4px;height:17px;background:#1a1a1a"></div>
<div class="a" style="left:933.4px;top:738.5px;width:2.4px;height:8px;background:#1a1a1a"></div>
<div class="a" style="left:950px;top:727.4px;width:84.7px;height:30.4px;background:#2a2a2a;border:2px solid #111;box-sizing:border-box"></div>
<div class="a" style="left:952px;top:729.4px;width:25px;height:26.4px;background:#00707F"></div>
<div class="a t" style="left:961.4px;top:731.2px;font-size:24px;color:#F2E8D5;transform:scaleX(1.0271);-webkit-text-stroke:0.45px #F2E8D5">1.00x</div>
<div class="a" style="left:1073.6px;top:727.2px;width:36.2px;height:30.7px;background:#2a2a2a;border:2px solid #111;box-sizing:border-box"></div>
<div class="a t" style="left:1084.4px;top:731.2px;font-size:24px;color:#F2E8D5;-webkit-text-stroke:0.45px #F2E8D5">H</div>
<div class="a" style="left:1117px;top:727.2px;width:36px;height:30.7px;background:#2a2a2a;border:2px solid #111;box-sizing:border-box"></div>
<div class="a t" style="left:1124.7px;top:731.2px;font-size:24px;color:#F2E8D5;transform:scaleX(1.0800);-webkit-text-stroke:0.45px #F2E8D5">W</div>
<div class="a" style="left:0px;top:773px;width:1258px;height:485px;background:#333333"></div>
<div class="a" style="left:-10px;top:790px;width:222px;height:454px;background:#5e5e5e;border-radius:7px"></div>
<svg class="a" style="left:94.8px;top:793.5px" width="33" height="33" viewBox="-16.5 -16.5 33 33"><circle cx="0" cy="0" r="14.5" fill="#262626" stroke="#161616" stroke-width="2"/><path d="M-8,-0.5 A8,8 0 0 1 2,-7.8" fill="none" stroke="#F2E8D5" stroke-width="2.8"/><polygon points="-12,-1.5 -4.5,-1.5 -8.2,4.5" fill="#F2E8D5"/><path d="M8,0.5 A8,8 0 0 1 -2,7.8" fill="none" stroke="#F2E8D5" stroke-width="2.8"/><polygon points="12,1.5 4.5,1.5 8.2,-4.5" fill="#F2E8D5"/></svg>
<svg class="a" style="left:133.8px;top:793.5px" width="33" height="33" viewBox="-16.5 -16.5 33 33"><circle cx="0" cy="0" r="14.5" fill="#262626" stroke="#161616" stroke-width="2"/><path d="M-8.5,-8 H4.5 L8.5,-4 V8.5 H-8.5 Z" fill="#F2E8D5"/><rect x="-4" y="-5.5" width="7.5" height="4" fill="#262626"/></svg>
<svg class="a" style="left:172.5px;top:793.5px" width="33" height="33" viewBox="-16.5 -16.5 33 33"><circle cx="0" cy="0" r="14.5" fill="#262626" stroke="#161616" stroke-width="2"/><circle cx="-7.3" cy="0.5" r="2.4" fill="#F2E8D5"/><circle cx="0" cy="0.5" r="2.4" fill="#F2E8D5"/><circle cx="7.3" cy="0.5" r="2.4" fill="#F2E8D5"/></svg>
<div class="a" style="left:-10px;top:831px;width:86.3px;height:323px;background:#1c1c1c;border-radius:7px;overflow:hidden"><div class="a" style="left:0;top:32px;width:90px;height:2px;background:#383838"></div><div class="a" style="left:0;top:97px;width:90px;height:2px;background:#383838"></div><div class="a" style="left:0;top:227px;width:90px;height:2px;background:#383838"></div><div class="a" style="left:0;top:291px;width:90px;height:2px;background:#383838"></div><div class="a" style="left:71.6px;top:0;width:2px;height:323px;background:#383838"></div><div class="a" style="left:0;top:160.5px;width:90px;height:3px;background:#19C4DE"></div></div>
<div class="a t" style="left:-7px;top:1126px;font-size:20px;color:#d8d0c4">x</div>
<div class="a" style="left:-10px;top:1161px;width:86.3px;height:78px;background:#474747;border-radius:7px"></div>
<div class="a" style="left:-5px;top:1167.3px;width:71.5px;height:31.7px;background:#474747;border:2.5px solid #111;box-sizing:border-box"></div>
<svg class="a" style="left:0;top:1172px" width="24" height="24"><path d="M-2,3.5 H10 Q18.5,3.5 18.5,12 V22" fill="none" stroke="#F2E8D5" stroke-width="2.4"/></svg>
<svg class="a" style="left:45.5px;top:1177.5px" width="17" height="13"><polygon points="0,0 16,0 8,12" fill="#F2E8D5"/></svg>
<div class="a" style="left:-5px;top:1207px;width:25px;height:26px;background:#262626;border:2px solid #151515;box-sizing:border-box"></div>
<div class="a t" style="left:35.8px;top:1208.0px;font-size:24px;color:#F2E8D5;transform:scaleX(1.0800);-webkit-text-stroke:0.45px #F2E8D5">8</div>
<div class="a" style="left:81px;top:831.4px;width:126px;height:407.6px;background:#474747;border-radius:7px"></div>
<div class="a" style="left:88.8px;top:845.9px;width:50.1px;height:30.8px;background:#3D6BBF;border:2px solid #151515;box-sizing:border-box"></div>
<svg class="a" style="left:100px;top:847px" width="28" height="28" viewBox="0 0 28 28"><path d="M7.3,22 A9.3,9.3 0 1 1 20.7,22" fill="none" stroke="#15233f" stroke-width="3.2"/><path d="M4.5,15 Q3.5,22 10,24.5 L10.5,16 Z" fill="#15233f"/><path d="M23.5,15 Q24.5,22 18,24.5 L17.5,16 Z" fill="#15233f"/></svg>
<div class="a" style="left:149.4px;top:845.9px;width:50.1px;height:30.8px;background:#FFAA55;border:2px solid #151515;box-sizing:border-box"></div>
<div class="a" style="left:158.7px;top:862.9px;width:2.4px;height:6.7px;background:#3a2a1a"></div>
<div class="a" style="left:163.8px;top:852.9px;width:2.4px;height:16.7px;background:#3a2a1a"></div>
<div class="a" style="left:168.2px;top:857.6px;width:2.4px;height:12px;background:#3a2a1a"></div>
<div class="a" style="left:173.2px;top:852.9px;width:2.4px;height:16.7px;background:#3a2a1a"></div>
<div class="a" style="left:178.1px;top:862.4px;width:2.4px;height:7.2px;background:#3a2a1a"></div>
<div class="a" style="left:183.0px;top:857.6px;width:2.4px;height:12px;background:#3a2a1a"></div>
<div class="a" style="left:187.8px;top:864.8px;width:2.4px;height:4.8px;background:#3a2a1a"></div>
<div class="a t" style="left:90.2px;top:886.4px;font-size:24px;color:#F2E8D5;letter-spacing:0.41px;transform:scaleX(1.0400);-webkit-text-stroke:0.9px #F2E8D5">Mode</div>
<div class="a" style="left:88.7px;top:913px;width:111.5px;height:31.5px;background:#262626;border:2px solid #151515;box-sizing:border-box"></div>
<div class="a t" style="left:93.5px;top:918.0px;font-size:24px;color:#F2E8D5;letter-spacing:0.24px;transform:scaleX(1.0800);-webkit-text-stroke:0.45px #F2E8D5">Stereo</div>
<svg class="a" style="left:178.5px;top:922.5px" width="17" height="13"><polygon points="0,0 16,0 8,12" fill="#F2E8D5"/></svg>
<div class="a t" style="left:90.2px;top:954.5px;font-size:24px;color:#F2E8D5;letter-spacing:0.35px;transform:scaleX(1.0400);-webkit-text-stroke:0.9px #F2E8D5">Edit</div>
<div class="a" style="left:88.7px;top:981px;width:111.5px;height:30px;background:#262626;border:2px solid #151515;box-sizing:border-box"></div>
<div class="a t" style="left:138.3px;top:985.5px;font-size:23px;color:#8a8680;transform:scaleX(1.0800);-webkit-text-stroke:0.45px #8a8680">L</div>
<div class="a t" style="left:89.5px;top:1024.0px;font-size:24px;color:#F2E8D5;letter-spacing:0.56px;transform:scaleX(1.0400);-webkit-text-stroke:0.9px #F2E8D5">Adapt. Q</div>
<div class="a" style="left:89px;top:1052px;width:110px;height:30px;background:#FFAA55;border:2px solid #151515;box-sizing:border-box"></div>
<div class="a t" style="left:128.2px;top:1056.5px;font-size:23px;color:#111;letter-spacing:-0.20px;-webkit-text-stroke:0.45px #111">On</div>
<div class="a t" style="left:89.7px;top:1094.0px;font-size:24px;color:#F2E8D5;transform:scaleX(1.0213);-webkit-text-stroke:0.9px #F2E8D5">Scale</div>
<div class="a" style="left:89px;top:1122px;width:110px;height:30px;background:#262626;border:2px solid #151515;box-sizing:border-box"></div>
<div class="a" style="left:91px;top:1124px;width:80px;height:26px;background:#006E80"></div>
<div class="a t" style="left:111.8px;top:1126.0px;font-size:24px;color:#F2E8D5;letter-spacing:-0.32px;-webkit-text-stroke:0.45px #F2E8D5">100 %</div>
<div class="a t" style="left:89.7px;top:1166.7px;font-size:24px;color:#F2E8D5;transform:scaleX(1.0077);-webkit-text-stroke:0.9px #F2E8D5">Gain</div>
<div class="a" style="left:89px;top:1194.5px;width:110px;height:30px;background:#262626;border:2px solid #151515;box-sizing:border-box"></div>
<div class="a" style="left:91px;top:1196.5px;width:52.6px;height:26px;background:#006E80"></div>
<div class="a t" style="left:100.5px;top:1198.5px;font-size:24px;color:#F2E8D5;transform:scaleX(1.0386);-webkit-text-stroke:0.45px #F2E8D5">0.00 dB</div>
<div class="a" style="left:216.8px;top:887px;width:5.1px;height:260.5999999999999px;background:#1e1e1e"></div>
<div class="a" style="left:216.8px;top:914px;width:5.1px;height:2px;background:#454545"></div>
<div class="a" style="left:216.8px;top:990px;width:5.1px;height:2.4px;background:#5CFF3C"></div>
<div class="a" style="left:216.8px;top:1059px;width:5.1px;height:24px;background:#1A9E44"></div>
<div class="a" style="left:216.8px;top:1083px;width:5.1px;height:64.59999999999991px;background:#12EE5E"></div>
<div class="a" style="left:224.20000000000002px;top:887px;width:5.1px;height:260.5999999999999px;background:#1e1e1e"></div>
<div class="a" style="left:224.20000000000002px;top:914px;width:5.1px;height:2px;background:#454545"></div>
<div class="a" style="left:224.20000000000002px;top:982.5px;width:5.1px;height:2.4px;background:#5CFF3C"></div>
<div class="a" style="left:224.20000000000002px;top:1083.8px;width:5.1px;height:7.900000000000091px;background:#1A9E44"></div>
<div class="a" style="left:224.20000000000002px;top:1091.7px;width:5.1px;height:55.899999999999864px;background:#12EE5E"></div>
<div class="a" style="left:234px;top:790px;width:914px;height:454px;background:#927E57;border-radius:8px"></div>
<div class="a" style="left:238.5px;top:831px;width:905.5px;height:408.5px;background:#474747;border-radius:0 0 4px 4px"></div>
<svg class="a" style="left:241.6px;top:794.0px" width="33.5" height="33.5" viewBox="-16.75 -16.75 33.5 33.5"><circle cx="0" cy="0" r="14.75" fill="#FFA94D" stroke="#1e1e1e" stroke-width="2"/></svg>
<div class="a t" style="left:285.5px;top:799.0px;font-size:24px;color:#111;letter-spacing:0.27px;transform:scaleX(1.0400);-webkit-text-stroke:0.9px #111">Glow-Up by Sample Werks</div>
<svg class="a" style="left:595px;top:793px" width="32" height="32" viewBox="595 793 32 32"><g stroke="#4433E8" stroke-width="3.7" stroke-linecap="round" fill="none"><line x1="607" y1="814" x2="601.6" y2="808.6"/><line x1="607.6" y1="809" x2="604.9" y2="799.6"/><line x1="611.8" y1="809" x2="611.8" y2="798.3"/><line x1="616.6" y1="809" x2="617.2" y2="799.8"/><line x1="620.3" y1="810" x2="622.5" y2="803.9"/></g><path d="M604,809.5 L623,806 L621.5,815 L618.5,822.3 L609.5,822.3 L603.5,814 Z" fill="#4433E8"/></svg>
<div class="a" style="left:872.7px;top:795px;width:74.7px;height:31px;background:#262626;border:2px solid #151515;border-radius:15px;box-sizing:border-box"></div>
<div class="a t" style="left:880.7px;top:799.3px;font-size:24px;color:#F2E8D5;transform:scaleX(1.0175);-webkit-text-stroke:0.45px #F2E8D5">Rand</div>
<div class="a" style="left:957.3px;top:795px;width:60.6px;height:31px;background:#262626;border:2.5px solid #111;box-sizing:border-box"></div>
<div class="a t" style="left:963.1px;top:799.3px;font-size:24px;color:#F2E8D5;transform:scaleX(1.0574);-webkit-text-stroke:0.45px #F2E8D5">Map</div>
<svg class="a" style="left:1026.8px;top:794.0px" width="32.5" height="32.5" viewBox="-16.25 -16.25 32.5 32.5"><circle cx="0" cy="0" r="14.25" fill="#262626" stroke="#161616" stroke-width="2"/><path d="M-8,-0.5 A8,8 0 0 1 2,-7.8" fill="none" stroke="#F2E8D5" stroke-width="2.8"/><polygon points="-12,-1.5 -4.5,-1.5 -8.2,4.5" fill="#F2E8D5"/><path d="M8,0.5 A8,8 0 0 1 -2,7.8" fill="none" stroke="#F2E8D5" stroke-width="2.8"/><polygon points="12,1.5 4.5,1.5 8.2,-4.5" fill="#F2E8D5"/></svg>
<svg class="a" style="left:1068.5px;top:794.6px" width="32" height="32" viewBox="-16.0 -16.0 32 32"><circle cx="0" cy="0" r="14.0" fill="#262626" stroke="#161616" stroke-width="2"/><path d="M-8.5,-8 H4.5 L8.5,-4 V8.5 H-8.5 Z" fill="#F2E8D5"/><rect x="-4" y="-5.5" width="7.5" height="4" fill="#262626"/></svg>
<svg class="a" style="left:1109.6px;top:794.6px" width="32" height="32" viewBox="-16.0 -16.0 32 32"><circle cx="0" cy="0" r="14.0" fill="#262626" stroke="#161616" stroke-width="2"/><circle cx="-7.3" cy="0.5" r="2.4" fill="#F2E8D5"/><circle cx="0" cy="0.5" r="2.4" fill="#F2E8D5"/><circle cx="7.3" cy="0.5" r="2.4" fill="#F2E8D5"/></svg>
<svg class="a" style="left:242.2px;top:839.4px" width="33.8" height="33.8" viewBox="-16.9 -16.9 33.8 33.8"><circle cx="0" cy="0" r="15.4" fill="#FFA94D" stroke="#FFA94D" stroke-width="1"/><path d="M-5.98,7.12 A9.3,9.3 0 1 1 5.98,7.12" fill="none" stroke="#3c3c3c" stroke-width="3"/><line x1="-0.8" y1="-0.8" x2="6.4" y2="7.4" stroke="#3c3c3c" stroke-width="3" stroke-linecap="round"/></svg>
<svg class="a" style="left:242.4px;top:880.7px" width="33" height="33" viewBox="-16.5 -16.5 33 33"><circle cx="0" cy="0" r="14.5" fill="#262626" stroke="#161616" stroke-width="2"/><rect x="-8" y="-1.3" width="16" height="2.6" fill="#F2E8D5"/><rect x="-1.3" y="-8" width="2.6" height="16" fill="#F2E8D5"/></svg>
<svg class="a" style="left:242.4px;top:916.9px" width="33" height="33" viewBox="-16.5 -16.5 33 33"><circle cx="0" cy="0" r="14.5" fill="#262626" stroke="#161616" stroke-width="2"/><rect x="-8" y="-1.3" width="16" height="2.6" fill="#F2E8D5"/></svg>
<svg class="a" style="left:242.4px;top:958.2px" width="33" height="33" viewBox="-16.5 -16.5 33 33"><circle cx="0" cy="0" r="15.0" fill="#FFA94D" stroke="#FFA94D" stroke-width="1"/><path d="M-8.5,-5.5 H-3.5 V-8 H3.5 V-5.5 H8.5 V6.5 H-8.5 Z" fill="#3c3c3c"/><rect x="-3.6" y="-0.1" width="7.2" height="2.2" fill="#FFA94D"/><rect x="-1.1" y="-2.6" width="2.2" height="7.2" fill="#FFA94D"/></svg>
<svg class="a" style="left:242.4px;top:999.4px" width="33" height="33" viewBox="-16.5 -16.5 33 33"><circle cx="0" cy="0" r="15.0" fill="#A9A196" stroke="#A9A196" stroke-width="1"/><rect x="-9" y="-5" width="18" height="10" rx="3" fill="none" stroke="#3a3a3a" stroke-width="2.6"/><rect x="-8" y="-3.5" width="16" height="2.5" fill="#3a3a3a"/></svg>
<svg class="a" style="left:242.4px;top:1040.7px" width="33" height="33" viewBox="-16.5 -16.5 33 33"><circle cx="0" cy="0" r="15.0" fill="#A9A196" stroke="#A9A196" stroke-width="1"/><rect x="-7" y="-6" width="2.5" height="2.5" fill="#3a3a3a"/><rect x="-3" y="-6" width="11" height="2.5" fill="#3a3a3a"/><rect x="-7" y="-1.3" width="2.5" height="2.5" fill="#3a3a3a"/><rect x="-3" y="-1.3" width="11" height="2.5" fill="#3a3a3a"/><rect x="-7" y="3.4" width="2.5" height="2.5" fill="#3a3a3a"/><rect x="-3" y="3.4" width="11" height="2.5" fill="#3a3a3a"/></svg>
<div class="a" style="left:398px;top:843px;width:103px;height:30px;background:#262626;border:2px solid #151515;border-radius:15px;box-sizing:border-box"></div>
<div class="a t" style="left:425.0px;top:847.3px;font-size:24px;color:#F2E8D5;transform:scaleX(1.0204);-webkit-text-stroke:0.45px #F2E8D5">New</div>
<div class="a" style="left:285.3px;top:882px;width:332.1px;height:349px;border:2px solid #2c2c2c;border-radius:5px;box-sizing:border-box"></div>
<div class="a" style="left:287px;top:928.2px;width:329px;height:2px;background:#2c2c2c"></div>
<div class="a" style="left:287px;top:974.3px;width:329px;height:2px;background:#2c2c2c"></div>
<div class="a" style="left:287px;top:1020.3px;width:329px;height:2px;background:#2c2c2c"></div>
<div class="a" style="left:287px;top:1066.6px;width:329px;height:2px;background:#2c2c2c"></div>
<div class="a" style="left:287px;top:1112.3px;width:329px;height:2px;background:#2c2c2c"></div>
<div class="a" style="left:287px;top:1158.2px;width:329px;height:2px;background:#2c2c2c"></div>
<svg class="a" style="left:295.5px;top:889.5px" width="33" height="33" viewBox="-16.5 -16.5 33 33"><circle cx="0" cy="0" r="14.5" fill="#1e1e1e" stroke="#111" stroke-width="2"/><path d="M-8.5,-5.5 H-3.5 V-8 H3.5 V-5.5 H8.5 V6.5 H-8.5 Z" fill="#F2E8D5"/><rect x="-3.6" y="-0.1" width="7.2" height="2.2" fill="#1e1e1e"/><rect x="-1.1" y="-2.6" width="2.2" height="7.2" fill="#1e1e1e"/></svg>
<div class="a t" style="left:350.0px;top:893.8px;font-size:24px;color:#F2E8D5;letter-spacing:1.73px;transform:scaleX(1.0800);-webkit-text-stroke:0.45px #F2E8D5">Off</div>
<svg class="a" style="left:546.5px;top:893px" width="25" height="26"><polygon points="1.5,1.5 23,13 1.5,24.5" fill="#262626" stroke="#1a1a1a" stroke-width="2" stroke-linejoin="round"/></svg>
<svg class="a" style="left:295.5px;top:935.5px" width="33" height="33" viewBox="-16.5 -16.5 33 33"><circle cx="0" cy="0" r="14.5" fill="#1e1e1e" stroke="#111" stroke-width="2"/><path d="M-8.5,-5.5 H-3.5 V-8 H3.5 V-5.5 H8.5 V6.5 H-8.5 Z" fill="#F2E8D5"/><rect x="-3.6" y="-0.1" width="7.2" height="2.2" fill="#1e1e1e"/><rect x="-1.1" y="-2.6" width="2.2" height="7.2" fill="#1e1e1e"/></svg>
<div class="a t" style="left:350.0px;top:939.8px;font-size:24px;color:#F2E8D5;letter-spacing:0.71px;transform:scaleX(1.0800);-webkit-text-stroke:0.45px #F2E8D5">Default</div>
<svg class="a" style="left:546.5px;top:939px" width="25" height="26"><polygon points="1.5,1.5 23,13 1.5,24.5" fill="#262626" stroke="#1a1a1a" stroke-width="2" stroke-linejoin="round"/></svg>
<svg class="a" style="left:295.5px;top:981.5px" width="33" height="33" viewBox="-16.5 -16.5 33 33"><circle cx="0" cy="0" r="14.5" fill="#1e1e1e" stroke="#111" stroke-width="2"/><path d="M-8.5,-5.5 H-3.5 V-8 H3.5 V-5.5 H8.5 V6.5 H-8.5 Z" fill="#F2E8D5"/><rect x="-3.6" y="-0.1" width="7.2" height="2.2" fill="#1e1e1e"/><rect x="-1.1" y="-2.6" width="2.2" height="7.2" fill="#1e1e1e"/></svg>
<div class="a t" style="left:350.6px;top:985.8px;font-size:24px;color:#F2E8D5;transform:scaleX(1.0421);-webkit-text-stroke:0.45px #F2E8D5">Vocal Glow</div>
<svg class="a" style="left:546.5px;top:985px" width="25" height="26"><polygon points="1.5,1.5 23,13 1.5,24.5" fill="#262626" stroke="#1a1a1a" stroke-width="2" stroke-linejoin="round"/></svg>
<svg class="a" style="left:295.5px;top:1027.5px" width="33" height="33" viewBox="-16.5 -16.5 33 33"><circle cx="0" cy="0" r="14.5" fill="#1e1e1e" stroke="#111" stroke-width="2"/><path d="M-8.5,-5.5 H-3.5 V-8 H3.5 V-5.5 H8.5 V6.5 H-8.5 Z" fill="#F2E8D5"/><rect x="-3.6" y="-0.1" width="7.2" height="2.2" fill="#1e1e1e"/><rect x="-1.1" y="-2.6" width="2.2" height="7.2" fill="#1e1e1e"/></svg>
<div class="a t" style="left:339.2px;top:1031.8px;font-size:24px;color:#F2E8D5;transform:scaleX(1.0636);-webkit-text-stroke:0.45px #F2E8D5">*Pad Sparkle</div>
<svg class="a" style="left:546.5px;top:1031px" width="25" height="26"><polygon points="1.5,1.5 23,13 1.5,24.5" fill="#F2E8D5" stroke="#1a1a1a" stroke-width="2" stroke-linejoin="round"/></svg>
<svg class="a" style="left:295.5px;top:1073.5px" width="33" height="33" viewBox="-16.5 -16.5 33 33"><circle cx="0" cy="0" r="14.5" fill="#1e1e1e" stroke="#111" stroke-width="2"/><path d="M-8.5,-5.5 H-3.5 V-8 H3.5 V-5.5 H8.5 V6.5 H-8.5 Z" fill="#F2E8D5"/><rect x="-3.6" y="-0.1" width="7.2" height="2.2" fill="#1e1e1e"/><rect x="-1.1" y="-2.6" width="2.2" height="7.2" fill="#1e1e1e"/></svg>
<div class="a t" style="left:350.6px;top:1077.8px;font-size:24px;color:#F2E8D5;letter-spacing:0.01px;transform:scaleX(1.0800);-webkit-text-stroke:0.45px #F2E8D5">Bright Lead</div>
<svg class="a" style="left:546.5px;top:1077px" width="25" height="26"><polygon points="1.5,1.5 23,13 1.5,24.5" fill="#262626" stroke="#1a1a1a" stroke-width="2" stroke-linejoin="round"/></svg>
<svg class="a" style="left:295.5px;top:1119.5px" width="33" height="33" viewBox="-16.5 -16.5 33 33"><circle cx="0" cy="0" r="14.5" fill="#1e1e1e" stroke="#111" stroke-width="2"/><path d="M-8.5,-5.5 H-3.5 V-8 H3.5 V-5.5 H8.5 V6.5 H-8.5 Z" fill="#F2E8D5"/><rect x="-3.6" y="-0.1" width="7.2" height="2.2" fill="#1e1e1e"/><rect x="-1.1" y="-2.6" width="2.2" height="7.2" fill="#1e1e1e"/></svg>
<div class="a t" style="left:350.6px;top:1123.8px;font-size:24px;color:#F2E8D5;letter-spacing:0.04px;transform:scaleX(1.0800);-webkit-text-stroke:0.45px #F2E8D5">Ambient Dream</div>
<svg class="a" style="left:546.5px;top:1123px" width="25" height="26"><polygon points="1.5,1.5 23,13 1.5,24.5" fill="#262626" stroke="#1a1a1a" stroke-width="2" stroke-linejoin="round"/></svg>
<div class="a" style="left:592px;top:891px;width:17px;height:304px;background:#9C948B;border-radius:9px"></div>
<div class="a t" style="left:353.0px;top:1196.0px;font-size:24px;color:#F2E8D5;letter-spacing:0.42px;transform:scaleX(1.0800);-webkit-text-stroke:0.45px #F2E8D5">Macro Variations</div>
<div class="a" style="left:633.4px;top:841px;width:120.4px;height:192.5px;border:2px solid #2c2c2c;border-radius:5px;box-sizing:border-box;overflow:hidden"><div style="position:absolute;left:0;top:0;width:117px;height:68.5px;background:#F8F07A"></div></div>
<div class="a t" style="left:653.5px;top:850.4px;font-size:24px;color:#111;letter-spacing:0.87px;transform:scaleX(1.0800);-webkit-text-stroke:0.45px #111">Air Lift</div>
<svg class="a" style="left:658.5px;top:924.8px" width="72" height="72" viewBox="-36 -36 72 72"><path d="M12.99,-25.81 A28.9,28.9 0 0 1 14.45,25.03" fill="none" stroke="#141414" stroke-width="5.8"/><path d="M-14.45,25.03 A28.9,28.9 0 0 1 8.79,-27.53" fill="none" stroke="#12C0D8" stroke-width="5.8"/><line x1="0" y1="0" x2="9.15" y2="-28.63" stroke="#1e1e1e" stroke-width="4.6" stroke-linecap="round"/></svg>
<div class="a t" style="left:680.3px;top:990.4px;font-size:24px;color:#F2E8D5;letter-spacing:-0.70px;-webkit-text-stroke:0.45px #F2E8D5">71</div>
<div class="a" style="left:759.3px;top:841px;width:120.4px;height:192.5px;border:2px solid #2c2c2c;border-radius:5px;box-sizing:border-box;overflow:hidden"><div style="position:absolute;left:0;top:0;width:117px;height:68.5px;background:#FFED2E"></div></div>
<div class="a t" style="left:776.0px;top:850.4px;font-size:24px;color:#111;transform:scaleX(1.0274);-webkit-text-stroke:0.45px #111">Shine &amp;</div>
<div class="a t" style="left:779.0px;top:876.1px;font-size:24px;color:#111;letter-spacing:0.36px;transform:scaleX(1.0800);-webkit-text-stroke:0.45px #111">Exciter</div>
<svg class="a" style="left:784.4px;top:924.8px" width="72" height="72" viewBox="-36 -36 72 72"><path d="M-16.45,-23.76 A28.9,28.9 0 1 1 14.45,25.03" fill="none" stroke="#141414" stroke-width="5.8"/><path d="M-14.45,25.03 A28.9,28.9 0 0 1 -19.97,-20.89" fill="none" stroke="#12C0D8" stroke-width="5.8"/><line x1="0" y1="0" x2="-20.77" y2="-21.73" stroke="#1e1e1e" stroke-width="4.6" stroke-linecap="round"/></svg>
<div class="a t" style="left:805.7px;top:990.4px;font-size:24px;color:#F2E8D5;transform:scaleX(1.0259);-webkit-text-stroke:0.45px #F2E8D5">45</div>
<div class="a" style="left:885.2px;top:841px;width:120.4px;height:192.5px;border:2px solid #2c2c2c;border-radius:5px;box-sizing:border-box;overflow:hidden"><div style="position:absolute;left:0;top:0;width:117px;height:68.5px;background:#EEF8B4"></div></div>
<div class="a t" style="left:907.0px;top:850.4px;font-size:24px;color:#111;letter-spacing:0.13px;transform:scaleX(1.0800);-webkit-text-stroke:0.45px #111">Stereo</div>
<div class="a t" style="left:909.0px;top:876.1px;font-size:24px;color:#111;transform:scaleX(1.0290);-webkit-text-stroke:0.45px #111">Sheen</div>
<svg class="a" style="left:910.3000000000001px;top:924.8px" width="72" height="72" viewBox="-36 -36 72 72"><path d="M27.42,-9.12 A28.9,28.9 0 0 1 14.45,25.03" fill="none" stroke="#141414" stroke-width="5.8"/><path d="M-14.45,25.03 A28.9,28.9 0 1 1 25.66,-13.30" fill="none" stroke="#12C0D8" stroke-width="5.8"/><line x1="0" y1="0" x2="26.68" y2="-13.83" stroke="#1e1e1e" stroke-width="4.6" stroke-linecap="round"/></svg>
<div class="a t" style="left:931.2px;top:990.4px;font-size:24px;color:#F2E8D5;transform:scaleX(1.0222);-webkit-text-stroke:0.45px #F2E8D5">90</div>
<div class="a" style="left:1011.1px;top:841px;width:120.4px;height:192.5px;border:2px solid #2c2c2c;border-radius:5px;box-sizing:border-box;overflow:hidden"><div style="position:absolute;left:0;top:0;width:117px;height:68.5px;background:#BDB46A"></div></div>
<div class="a t" style="left:1033.3px;top:850.4px;font-size:24px;color:#111;letter-spacing:0.44px;transform:scaleX(1.0800);-webkit-text-stroke:0.45px #111">Digital</div>
<div class="a t" style="left:1028.2px;top:876.1px;font-size:24px;color:#111;transform:scaleX(1.0753);-webkit-text-stroke:0.45px #111">Sparkle</div>
<svg class="a" style="left:1036.2px;top:924.8px" width="72" height="72" viewBox="-36 -36 72 72"><path d="M-9.01,-27.46 A28.9,28.9 0 0 1 14.45,25.03" fill="none" stroke="#141414" stroke-width="5.8"/><path d="M-14.45,25.03 A28.9,28.9 0 0 1 -13.19,-25.71" fill="none" stroke="#12C0D8" stroke-width="5.8"/><line x1="0" y1="0" x2="-13.72" y2="-26.74" stroke="#1e1e1e" stroke-width="4.6" stroke-linecap="round"/></svg>
<div class="a t" style="left:1057.5px;top:990.4px;font-size:24px;color:#F2E8D5;letter-spacing:-0.20px;-webkit-text-stroke:0.45px #F2E8D5">52</div>
<div class="a" style="left:633.4px;top:1039.2px;width:120.4px;height:193.6px;border:2px solid #2c2c2c;border-radius:5px;box-sizing:border-box;overflow:hidden"><div style="position:absolute;left:0;top:0;width:117px;height:68.5px;background:#DFC200"></div></div>
<div class="a t" style="left:665.4px;top:1048.6px;font-size:24px;color:#111;letter-spacing:-0.67px;-webkit-text-stroke:0.45px #111">Reso</div>
<div class="a t" style="left:651.4px;top:1074.3px;font-size:24px;color:#111;letter-spacing:0.02px;transform:scaleX(1.0800);-webkit-text-stroke:0.45px #111">Ringing</div>
<svg class="a" style="left:658.5px;top:1123.0px" width="72" height="72" viewBox="-36 -36 72 72"><path d="M-5.55,-28.36 A28.9,28.9 0 0 1 14.45,25.03" fill="none" stroke="#141414" stroke-width="5.8"/><path d="M-14.45,25.03 A28.9,28.9 0 0 1 -9.92,-27.14" fill="none" stroke="#12C0D8" stroke-width="5.8"/><line x1="0" y1="0" x2="-10.32" y2="-28.23" stroke="#1e1e1e" stroke-width="4.6" stroke-linecap="round"/></svg>
<div class="a t" style="left:679.4px;top:1188.6px;font-size:24px;color:#F2E8D5;transform:scaleX(1.0259);-webkit-text-stroke:0.45px #F2E8D5">55</div>
<div class="a" style="left:759.3px;top:1039.2px;width:120.4px;height:193.6px;border:2px solid #2c2c2c;border-radius:5px;box-sizing:border-box;overflow:hidden"><div style="position:absolute;left:0;top:0;width:117px;height:68.5px;background:#BDF400"></div></div>
<div class="a t" style="left:773.8px;top:1048.6px;font-size:24px;color:#111;transform:scaleX(1.0663);-webkit-text-stroke:0.45px #111">Smooth</div>
<div class="a t" style="left:769.6px;top:1074.3px;font-size:24px;color:#111;transform:scaleX(1.0659);-webkit-text-stroke:0.45px #111">Harshne</div>
<svg class="a" style="left:784.4px;top:1123.0px" width="72" height="72" viewBox="-36 -36 72 72"><path d="M-17.42,-23.06 A28.9,28.9 0 1 1 14.45,25.03" fill="none" stroke="#141414" stroke-width="5.8"/><path d="M-14.45,25.03 A28.9,28.9 0 0 1 -20.81,-20.05" fill="none" stroke="#12C0D8" stroke-width="5.8"/><line x1="0" y1="0" x2="-21.64" y2="-20.85" stroke="#1e1e1e" stroke-width="4.6" stroke-linecap="round"/></svg>
<div class="a t" style="left:805.7px;top:1188.6px;font-size:24px;color:#F2E8D5;transform:scaleX(1.0259);-webkit-text-stroke:0.45px #F2E8D5">44</div>
<div class="a" style="left:885.2px;top:1039.2px;width:120.4px;height:193.6px;border:2px solid #2c2c2c;border-radius:5px;box-sizing:border-box;overflow:hidden"><div style="position:absolute;left:0;top:0;width:117px;height:68.5px;background:#D2E29C"></div></div>
<div class="a t" style="left:904.8px;top:1048.6px;font-size:24px;color:#111;letter-spacing:0.73px;transform:scaleX(1.0800);-webkit-text-stroke:0.45px #111">Motion</div>
<div class="a t" style="left:897.2px;top:1074.3px;font-size:24px;color:#111;transform:scaleX(1.0374);-webkit-text-stroke:0.45px #111">&amp; Space</div>
<svg class="a" style="left:910.3000000000001px;top:1123.0px" width="72" height="72" viewBox="-36 -36 72 72"><path d="M11.92,-26.33 A28.9,28.9 0 0 1 14.45,25.03" fill="none" stroke="#141414" stroke-width="5.8"/><path d="M-14.45,25.03 A28.9,28.9 0 0 1 7.65,-27.87" fill="none" stroke="#12C0D8" stroke-width="5.8"/><line x1="0" y1="0" x2="7.96" y2="-28.98" stroke="#1e1e1e" stroke-width="4.6" stroke-linecap="round"/></svg>
<div class="a t" style="left:931.2px;top:1188.6px;font-size:24px;color:#F2E8D5;transform:scaleX(1.0222);-webkit-text-stroke:0.45px #F2E8D5">70</div>
<div class="a" style="left:1011.1px;top:1039.2px;width:120.4px;height:193.6px;border:2px solid #2c2c2c;border-radius:5px;box-sizing:border-box;overflow:hidden"><div style="position:absolute;left:0;top:0;width:117px;height:68.5px;background:#FFFFFF"></div></div>
<div class="a t" style="left:1020.5px;top:1048.6px;font-size:24px;color:#111;letter-spacing:0.92px;transform:scaleX(1.0800);-webkit-text-stroke:0.45px #111">Dry/Wet</div>
<svg class="a" style="left:1036.2px;top:1123.0px" width="72" height="72" viewBox="-36 -36 72 72"><path d="M-14.45,25.03 A28.9,28.9 0 1 1 14.45,25.03" fill="none" stroke="#12C0D8" stroke-width="5.8"/><line x1="0" y1="0" x2="15.03" y2="26.03" stroke="#1e1e1e" stroke-width="4.6" stroke-linecap="round"/></svg>
<div class="a t" style="left:1050.3px;top:1188.6px;font-size:24px;color:#F2E8D5;transform:scaleX(1.0300);-webkit-text-stroke:0.45px #F2E8D5">127</div>
<div class="a" style="left:1153.5px;top:887px;width:5.1px;height:260.5999999999999px;background:#1e1e1e"></div>
<div class="a" style="left:1153.5px;top:914px;width:5.1px;height:2px;background:#454545"></div>
<div class="a" style="left:1153.5px;top:984px;width:5.1px;height:2.4px;background:#5CFF3C"></div>
<div class="a" style="left:1153.5px;top:1068.6px;width:5.1px;height:18.40000000000009px;background:#1A9E44"></div>
<div class="a" style="left:1153.5px;top:1087px;width:5.1px;height:60.59999999999991px;background:#12EE5E"></div>
<div class="a" style="left:1160.9px;top:887px;width:5.1px;height:260.5999999999999px;background:#1e1e1e"></div>
<div class="a" style="left:1160.9px;top:914px;width:5.1px;height:2px;background:#454545"></div>
<div class="a" style="left:1160.9px;top:981px;width:5.1px;height:2.4px;background:#5CFF3C"></div>
<div class="a" style="left:1160.9px;top:1082px;width:5.1px;height:8.700000000000045px;background:#1A9E44"></div>
<div class="a" style="left:1160.9px;top:1090.7px;width:5.1px;height:56.899999999999864px;background:#12EE5E"></div>
<div class="a" style="left:1170.5px;top:790px;width:120px;height:454px;background:#474747;border-radius:7px;overflow:hidden"><div style="position:absolute;left:0;top:0;width:120px;height:41px;background:#5c5c5c"></div></div>
<svg class="a" style="left:1177.0px;top:794.2px" width="32" height="32" viewBox="-16.0 -16.0 32 32"><circle cx="0" cy="0" r="14.0" fill="#FFA94D" stroke="#1a1a1a" stroke-width="2"/></svg>
<div class="a t" style="left:1219.0px;top:799.0px;font-size:24px;color:#F2E8D5;font-weight:bold">Glu</div>
<svg class="a" style="left:1177.0px;top:840.3px" width="32" height="32" viewBox="-16.0 -16.0 32 32"><circle cx="0" cy="0" r="14.0" fill="#262626" stroke="#161616" stroke-width="2"/><polygon points="-9,-6.5 9,-6.5 0,9" fill="#F2E8D5" stroke="#F2E8D5" stroke-width="1" stroke-linejoin="round"/></svg>
<svg class="a" style="left:1177.0px;top:878.8px" width="32" height="32" viewBox="-16.0 -16.0 32 32"><circle cx="0" cy="0" r="14.0" fill="#262626" stroke="#161616" stroke-width="2"/><path d="M-6.5,6.5 A9,9 0 1 1 6.5,6.5" fill="none" stroke="#c0b8ac" stroke-width="3.2"/><path d="M-9.5,1 Q-10,8 -3.5,10 L-3,2 Z" fill="#c0b8ac"/><path d="M9.5,1 Q10,8 3.5,10 L3,2 Z" fill="#c0b8ac"/></svg>
<div class="a" style="left:1216.3px;top:841px;width:2px;height:394px;background:#2a2a2a"></div>
<div class="a t" style="left:1180.8px;top:1203.0px;font-size:24px;color:#F2E8D5;transform:rotate(-90deg);letter-spacing:1.12px;-webkit-text-stroke:0.45px #F2E8D5">Sidechain</div>
<svg class="a" style="left:1183.7px;top:1212.0px" width="19" height="19" viewBox="-9.5 -9.5 19 19"><circle cx="0" cy="0" r="8.0" fill="#2e2e2e" stroke="#2e2e2e" stroke-width="1"/></svg>
<div class="a t" style="left:1243.5px;top:912.0px;font-size:18px;color:#F2E8D5;-webkit-text-stroke:0.45px #F2E8D5">.1</div>
<div class="a t" style="left:1234.8px;top:946.4px;font-size:18px;color:#F2E8D5;-webkit-text-stroke:0.45px #F2E8D5">.01</div>
<div class="a t" style="left:1244.9px;top:1043.5px;font-size:18px;color:#F2E8D5;-webkit-text-stroke:0.45px #F2E8D5">.2</div>
<div class="a t" style="left:1247.0px;top:1077.3px;font-size:18px;color:#F2E8D5;-webkit-text-stroke:0.45px #F2E8D5">.1</div>
<div class="a t" style="left:1251.0px;top:1207.6px;font-size:18px;color:#F2E8D5;-webkit-text-stroke:0.45px #F2E8D5">2</div>
</body></html>
